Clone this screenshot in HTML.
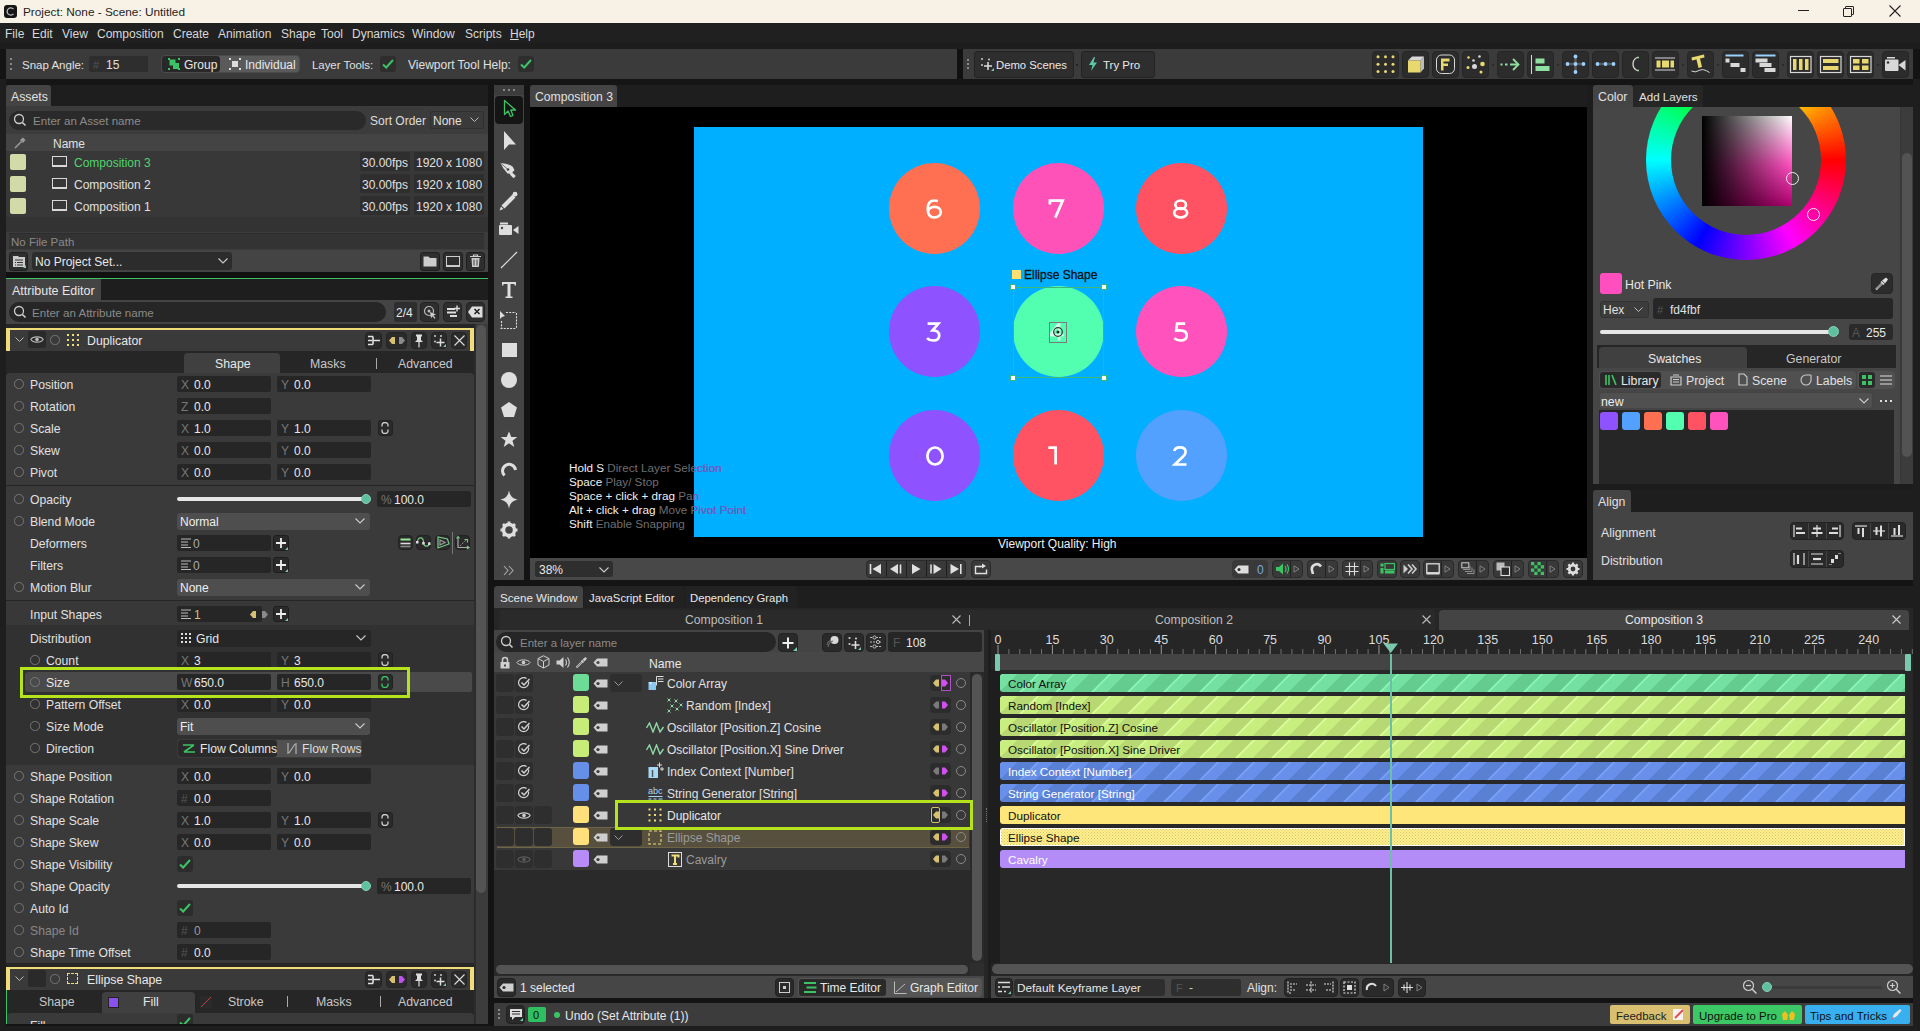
<!DOCTYPE html>
<html><head><meta charset="utf-8">
<style>
*{box-sizing:border-box;margin:0;padding:0}
html,body{width:1920px;height:1031px;overflow:hidden;background:#141414;font-family:"Liberation Sans",sans-serif;font-size:12px;color:#dcdcdc}
.a{position:absolute}
.t{position:absolute;white-space:nowrap;line-height:14px;margin-top:1px}
.fld{position:absolute;background:#2a2a2a;border-radius:2px}
.btn{position:absolute;background:#2c2c2c;border:1px solid #1f1f1f;border-radius:3px}
.gr{color:#7a7a7a}
</style></head><body>

<!-- TITLE BAR -->
<div class="a" style="left:0;top:0;width:1920px;height:23px;background:#f8f1e5"></div>
<div class="a" style="left:4px;top:5px;width:13px;height:13px;background:#151515;border-radius:3px"></div>
<svg class="a" style="left:4px;top:5px" width="13" height="13"><path d="M9.5 4.2A3.6 3.6 0 1 0 9.5 8.8" fill="none" stroke="#bbb" stroke-width="1.3"/></svg>
<div class="t" style="left:23px;top:4px;color:#1e1e1e;font-size:11.8px">Project: None - Scene: Untitled</div>
<div class="a" style="left:1798px;top:10px;width:11px;height:1px;background:#222"></div>
<div class="a" style="left:1845px;top:6px;width:9px;height:9px;border:1px solid #222;border-radius:1px"></div>
<div class="a" style="left:1843px;top:8px;width:9px;height:9px;border:1px solid #222;border-radius:1px;background:#f8f1e5"></div>
<svg class="a" style="left:1889px;top:5px" width="12" height="12"><path d="M0.5 0.5L11.5 11.5M11.5 0.5L0.5 11.5" stroke="#222" stroke-width="1.1"/></svg>

<!-- MENU -->
<div class="a" style="left:0;top:23px;width:1920px;height:20px;background:#202020"></div>
<div class="a" style="left:0;top:43px;width:1920px;height:6px;background:#1d1d1d"></div>
<div class="t" style="left:5px;top:26px;color:#d8d8d8">File</div>
<div class="t" style="left:32px;top:26px;color:#d8d8d8">Edit</div>
<div class="t" style="left:62px;top:26px;color:#d8d8d8">View</div>
<div class="t" style="left:97px;top:26px;color:#d8d8d8">Composition</div>
<div class="t" style="left:173px;top:26px;color:#d8d8d8">Create</div>
<div class="t" style="left:218px;top:26px;color:#d8d8d8">Animation</div>
<div class="t" style="left:281px;top:26px;color:#d8d8d8">Shape</div>
<div class="t" style="left:321px;top:26px;color:#d8d8d8">Tool</div>
<div class="t" style="left:352px;top:26px;color:#d8d8d8">Dynamics</div>
<div class="t" style="left:412px;top:26px;color:#d8d8d8">Window</div>
<div class="t" style="left:465px;top:26px;color:#d8d8d8">Scripts</div>
<div class="t" style="left:510px;top:26px;color:#d8d8d8"><u>H</u>elp</div>

<!-- TOOLBAR -->
<div class="a" style="left:6px;top:49px;width:951px;height:30px;background:#3b3b3b"></div>
<div class="a" style="left:963px;top:49px;width:950px;height:30px;background:#3b3b3b"></div>
<div class="a" style="left:0;top:79px;width:1920px;height:6px;background:#151515"></div>
<div class="a" style="left:10px;top:58px;width:2px;height:2px;background:#888;box-shadow:0 5px #888,0 10px #888"></div>
<div class="t" style="left:22px;top:57px;font-size:11.5px;color:#e0e0e0">Snap Angle:</div>
<div class="fld" style="left:89px;top:56px;width:59px;height:16px;background:#2e2e2e"></div>
<div class="t" style="left:93px;top:57px;color:#555;font-size:11px">#</div>
<div class="t" style="left:106px;top:57px;color:#e0e0e0">15</div>
<div class="a" style="left:161px;top:55px;width:139px;height:18px;background:#5a5a5a;border:1px solid #4a4a4a;border-radius:4px"></div>
<div class="a" style="left:162px;top:56px;width:58px;height:16px;background:#282828;border-radius:3px"></div>
<svg class="a" style="left:167px;top:57px" width="14" height="14"><path d="M1 1h2v2H1zM11 1h2v2h-2zM1 11h2v2H1zM11 11h2v2h-2z" fill="#3cc464"/><rect x="2.5" y="2.5" width="6" height="6" fill="#3cc464"/><rect x="6" y="6" width="6" height="6" fill="#3cc464"/></svg>
<div class="t" style="left:184px;top:57px;color:#e8e8e8">Group</div>
<svg class="a" style="left:228px;top:57px" width="14" height="14"><path d="M1 1h2v2H1zM11 1h2v2h-2zM1 11h2v2H1zM11 11h2v2h-2z" fill="#ddd"/><rect x="4" y="4" width="6" height="6" fill="#ddd"/></svg>
<div class="t" style="left:245px;top:57px;color:#e8e8e8">Individual</div>
<div class="t" style="left:312px;top:57px;font-size:11.4px;color:#e0e0e0">Layer Tools:</div>
<div class="fld" style="left:380px;top:56px;width:16px;height:16px;background:#2e2e2e;border-radius:3px"></div>
<svg class="a" style="left:381px;top:58px" width="14" height="12"><path d="M2 6.5L5.2 9.5L12 2" fill="none" stroke="#3cc464" stroke-width="2"/></svg>
<div class="t" style="left:408px;top:57px;color:#e0e0e0">Viewport Tool Help:</div>
<div class="fld" style="left:518px;top:56px;width:16px;height:16px;background:#2e2e2e;border-radius:3px"></div>
<svg class="a" style="left:519px;top:58px" width="14" height="12"><path d="M2 6.5L5.2 9.5L12 2" fill="none" stroke="#3cc464" stroke-width="2"/></svg>

<div class="a" style="left:957px;top:49px;width:6px;height:30px;background:#111"></div>
<div class="a" style="left:967px;top:59px;width:2px;height:2px;background:#888;box-shadow:0 4px #888,0 8px #888"></div>
<div class="btn" style="left:974px;top:51px;width:100px;height:27px;background:#2e2e2e;border-color:#232323"></div>
<svg class="a" style="left:980px;top:57px" width="14" height="14"><circle cx="2" cy="2" r="1" fill="#ccc"/><circle cx="9" cy="2.5" r="1" fill="#ccc"/><circle cx="2" cy="8" r="1" fill="#ccc"/><path d="M8 5v8M4 9h8" stroke="#ddd" stroke-width="1.5"/><path d="M11 14l3-3v3z" fill="#7ac8b0"/></svg>
<div class="t" style="left:996px;top:57px;font-size:11.3px;color:#e8e8e8">Demo Scenes</div>
<div class="a" style="left:1076px;top:64px;width:2px;height:2px;background:#222"></div>
<div class="btn" style="left:1081px;top:51px;width:74px;height:27px;background:#2e2e2e;border-color:#232323"></div>
<svg class="a" style="left:1088px;top:57px" width="10" height="14"><path d="M6 0L1 8h3.5L3 14l6-8.5H5.5L7 0z" fill="#5cc8a8"/></svg>
<div class="t" style="left:1103px;top:57px;font-size:11.5px;color:#e8e8e8">Try Pro</div>
<div class="a" style="left:6px;top:85px;width:482px;height:21px;background:#1e1e1e"></div>
<div class="a" style="left:6px;top:279px;width:482px;height:21px;background:#1e1e1e"></div>
<div class="a" style="left:530px;top:85px;width:1057px;height:22px;background:#1e1e1e"></div>
<div class="a" style="left:1593px;top:85px;width:320px;height:22px;background:#1e1e1e"></div>
<div class="a" style="left:1593px;top:490px;width:320px;height:22px;background:#1e1e1e"></div>
<div class="a" style="left:494px;top:586px;width:1419px;height:22px;background:#1e1e1e"></div>
<div class="a" style="left:0;top:79px;width:6px;height:952px;background:#1e1e1e"></div>
<div class="a" style="left:1913px;top:79px;width:7px;height:952px;background:#1e1e1e"></div>
<div class="a" style="left:0;top:1026px;width:1920px;height:5px;background:#1e1e1e"></div>
<div class="a" style="left:1587px;top:85px;width:6px;height:495px;background:#1c1c1c"></div>
<!-- TB ICONS -->
<div class="a" style="left:1372px;top:51px;width:27px;height:27px;background:#2c2c2c;border-radius:4px;border:1px solid #262626"></div>
<svg class="a" style="left:1372px;top:51px" width="27" height="27"><circle cx="6" cy="5.8" r="1.5" fill="#e8d870"/><circle cx="6" cy="13.2" r="1.5" fill="#e8d870"/><circle cx="6" cy="20.6" r="1.5" fill="#e8d870"/><circle cx="13.5" cy="5.8" r="1.5" fill="#e8d870"/><circle cx="13.5" cy="13.2" r="1.5" fill="#e8d870"/><circle cx="13.5" cy="20.6" r="1.5" fill="#e8d870"/><circle cx="21" cy="5.8" r="1.5" fill="#e8d870"/><circle cx="21" cy="13.2" r="1.5" fill="#e8d870"/><circle cx="21" cy="20.6" r="1.5" fill="#e8d870"/></svg>
<div class="a" style="left:1402px;top:51px;width:27px;height:27px;background:#2c2c2c;border-radius:4px;border:1px solid #262626"></div>
<svg class="a" style="left:1402px;top:51px" width="27" height="27"><path d="M6 9.5L10 5.5H22L18.5 9.5z" fill="#d8d8d8"/><path d="M18.5 9.5L22 5.5V17.5L18.5 21.5z" fill="#bbb"/><rect x="6" y="9.5" width="12.5" height="12" fill="#e8d870"/></svg>
<div class="a" style="left:1432px;top:51px;width:27px;height:27px;background:#2c2c2c;border-radius:4px;border:1px solid #262626"></div>
<svg class="a" style="left:1432px;top:51px" width="27" height="27"><rect x="4.5" y="4" width="18" height="18.5" rx="5" fill="none" stroke="#d8d8d8" stroke-width="1"/><path d="M9 7.5h2.5v12H9zM11.5 7.5h6v3h-6zM11.5 12.5h4.5v2.5h-4.5z" fill="#e8d870"/></svg>
<div class="a" style="left:1462px;top:51px;width:27px;height:27px;background:#2c2c2c;border-radius:4px;border:1px solid #262626"></div>
<svg class="a" style="left:1462px;top:51px" width="27" height="27"><circle cx="6.5" cy="6.5" r="1.3" fill="#e8d870"/><circle cx="17.5" cy="5.5" r="1.3" fill="#d8d8d8"/><circle cx="11.5" cy="9.5" r="1.3" fill="#d8d8d8"/><circle cx="20.5" cy="13" r="2.3" fill="#e8d870"/><circle cx="6" cy="16.5" r="1.5" fill="#e8d870"/><circle cx="12.5" cy="15.5" r="2.5" fill="#d8d8d8"/><circle cx="19" cy="21" r="1.5" fill="#e8d870"/></svg>
<div class="a" style="left:1497px;top:51px;width:27px;height:27px;background:#2c2c2c;border-radius:4px;border:1px solid #262626"></div>
<svg class="a" style="left:1497px;top:51px" width="27" height="27"><path d="M3.5 13.5h2M8 13.5h2.5M13 13.5h8" stroke="#8fe0a0" stroke-width="1.8"/><path d="M16 8L21.5 13.5L16 19" fill="none" stroke="#8fe0a0" stroke-width="1.8"/></svg>
<div class="a" style="left:1527px;top:51px;width:27px;height:27px;background:#2c2c2c;border-radius:4px;border:1px solid #262626"></div>
<svg class="a" style="left:1527px;top:51px" width="27" height="27"><path d="M4.5 4v19" stroke="#d8d8d8" stroke-width="1"/><rect x="8.5" y="7.5" width="9" height="5" fill="#8fe0a0"/><rect x="8.5" y="15" width="14" height="5" fill="#8fe0a0"/></svg>
<div class="a" style="left:1562px;top:51px;width:27px;height:27px;background:#2c2c2c;border-radius:4px;border:1px solid #262626"></div>
<svg class="a" style="left:1562px;top:51px" width="27" height="27"><path d="M6 13h15M13.5 5.5v15" stroke="#5a5a5a" stroke-width="2.5"/><circle cx="13.5" cy="5.5" r="1.9" fill="#9ad0ff"/><circle cx="5.5" cy="13" r="1.9" fill="#9ad0ff"/><circle cx="13.5" cy="13" r="1.9" fill="#9ad0ff"/><circle cx="21.5" cy="13" r="1.9" fill="#9ad0ff"/><circle cx="13.5" cy="21" r="1.9" fill="#9ad0ff"/></svg>
<div class="a" style="left:1592px;top:51px;width:27px;height:27px;background:#2c2c2c;border-radius:4px;border:1px solid #262626"></div>
<svg class="a" style="left:1592px;top:51px" width="27" height="27"><path d="M5 13h18" stroke="#5a5a5a" stroke-width="2.5"/><circle cx="5.5" cy="13" r="1.9" fill="#9ad0ff"/><circle cx="13.5" cy="13" r="1.9" fill="#9ad0ff"/><circle cx="21.5" cy="13" r="1.9" fill="#9ad0ff"/></svg>
<div class="a" style="left:1622px;top:51px;width:27px;height:27px;background:#2c2c2c;border-radius:4px;border:1px solid #262626"></div>
<svg class="a" style="left:1622px;top:51px" width="27" height="27"><path d="M19 6.5A8 7.5 0 0 0 19 19.5" fill="none" stroke="#d8d8d8" stroke-width="1.3" transform="translate(-4,0)"/><path d="M15 6.5h2M15 19.5h2" stroke="#8fe0a0" stroke-width="1.6"/></svg>
<div class="a" style="left:1652px;top:51px;width:27px;height:27px;background:#2c2c2c;border-radius:4px;border:1px solid #262626"></div>
<svg class="a" style="left:1652px;top:51px" width="27" height="27"><path d="M3 7h20M3 19h20" stroke="#d8d8d8" stroke-width="1.2"/><rect x="4.5" y="9.5" width="4" height="7" fill="#e8d870"/><rect x="10" y="9.5" width="7" height="7" fill="#e8d870"/><rect x="18.5" y="9.5" width="3.5" height="7" fill="#e8d870"/></svg>
<div class="a" style="left:1687px;top:51px;width:27px;height:27px;background:#2c2c2c;border-radius:4px;border:1px solid #262626"></div>
<svg class="a" style="left:1687px;top:51px" width="27" height="27"><path d="M4.5 6.5L17 3.5L17.5 6.5L13 7.5L15 16L11.5 17L9.5 8.5L5 9.5z" fill="#e8d870"/><path d="M4.5 20Q8 22 12 19.5T22.5 21.5" fill="none" stroke="#d8d8d8" stroke-width="1"/></svg>
<div class="a" style="left:1722px;top:51px;width:27px;height:27px;background:#2c2c2c;border-radius:4px;border:1px solid #262626"></div>
<svg class="a" style="left:1722px;top:51px" width="27" height="27"><path d="M3.5 4.5h18" stroke="#9ad0ff" stroke-width="2"/><rect x="3.5" y="7.5" width="4" height="4" fill="#d8d8d8"/><rect x="8.5" y="12" width="9" height="4" fill="#d8d8d8"/><rect x="18.5" y="17" width="5" height="4" fill="#d8d8d8"/></svg>
<div class="a" style="left:1752px;top:51px;width:27px;height:27px;background:#2c2c2c;border-radius:4px;border:1px solid #262626"></div>
<svg class="a" style="left:1752px;top:51px" width="27" height="27"><path d="M3.5 4.5h20" stroke="#9ad0ff" stroke-width="2"/><rect x="3.5" y="7.5" width="12" height="4" fill="#d8d8d8"/><rect x="7.5" y="12" width="12" height="4" fill="#d8d8d8"/><rect x="12.5" y="17" width="11" height="4" fill="#d8d8d8"/></svg>
<div class="a" style="left:1787px;top:51px;width:27px;height:27px;background:#2c2c2c;border-radius:4px;border:1px solid #262626"></div>
<svg class="a" style="left:1787px;top:51px" width="27" height="27"><rect x="3.5" y="5.5" width="20.5" height="16" fill="none" stroke="#d8d8d8" stroke-width="1.2"/><rect x="6" y="8" width="3.5" height="11" fill="#e8d870"/><rect x="12" y="8" width="3.5" height="11" fill="#e8d870"/><rect x="18" y="8" width="3.5" height="11" fill="#e8d870"/></svg>
<div class="a" style="left:1817px;top:51px;width:27px;height:27px;background:#2c2c2c;border-radius:4px;border:1px solid #262626"></div>
<svg class="a" style="left:1817px;top:51px" width="27" height="27"><rect x="3.5" y="5.5" width="20.5" height="16" fill="none" stroke="#d8d8d8" stroke-width="1.2"/><rect x="6" y="8" width="15.5" height="4" fill="#e8d870"/><rect x="6" y="15" width="15.5" height="4" fill="#e8d870"/></svg>
<div class="a" style="left:1847px;top:51px;width:27px;height:27px;background:#2c2c2c;border-radius:4px;border:1px solid #262626"></div>
<svg class="a" style="left:1847px;top:51px" width="27" height="27"><rect x="3.5" y="5.5" width="20.5" height="16" fill="none" stroke="#d8d8d8" stroke-width="1.2"/><rect x="6" y="8" width="6.5" height="4.5" fill="#e8d870"/><rect x="15" y="8" width="6.5" height="4.5" fill="#e8d870"/><rect x="6" y="14.5" width="6.5" height="4.5" fill="#e8d870"/><rect x="15" y="14.5" width="6.5" height="4.5" fill="#e8d870"/></svg>
<div class="a" style="left:1882px;top:51px;width:27px;height:27px;background:#2c2c2c;border-radius:4px;border:1px solid #262626"></div>
<svg class="a" style="left:1882px;top:51px" width="27" height="27"><rect x="3" y="8.5" width="13.5" height="11.5" rx="1" fill="#d8d8d8"/><rect x="5" y="6" width="8" height="1.5" fill="#d8d8d8"/><path d="M16.5 14L23.5 9V19.5z" fill="#d8d8d8"/><circle cx="6" cy="11.5" r="1.3" fill="#333"/></svg>
<div class="a" style="left:1491.5px;top:63.5px;width:2px;height:2px;background:#262626;border-radius:50%"></div>
<div class="a" style="left:1556.5px;top:63.5px;width:2px;height:2px;background:#262626;border-radius:50%"></div>
<div class="a" style="left:1681.5px;top:63.5px;width:2px;height:2px;background:#262626;border-radius:50%"></div>
<div class="a" style="left:1716.5px;top:63.5px;width:2px;height:2px;background:#262626;border-radius:50%"></div>
<div class="a" style="left:1781.5px;top:63.5px;width:2px;height:2px;background:#262626;border-radius:50%"></div>
<div class="a" style="left:1876.5px;top:63.5px;width:2px;height:2px;background:#262626;border-radius:50%"></div>

<!-- ASSETS PANEL -->
<div class="a" style="left:6px;top:85px;width:45px;height:22px;background:#444;border-radius:3px 3px 0 0"></div>
<div class="t" style="left:11px;top:89px;color:#e0e0e0;font-size:12.3px">Assets</div>
<div class="a" style="left:6px;top:106px;width:482px;height:166px;background:#3c3c3c"></div>
<div class="a" style="left:9px;top:111px;width:357px;height:19px;background:#2a2a2a;border-radius:10px"></div>
<svg class="a" style="left:13px;top:113px" width="14" height="14"><circle cx="6" cy="6" r="4.5" fill="none" stroke="#ccc" stroke-width="1.3"/><path d="M9.2 9.2L12.5 12.5" stroke="#ccc" stroke-width="1.6"/></svg>
<div class="t" style="left:33px;top:113px;color:#8a8a8a;font-size:11.6px">Enter an Asset name</div>
<div class="t" style="left:370px;top:113px;color:#ddd">Sort Order</div>
<div class="a" style="left:430px;top:111px;width:54px;height:18px;background:#3a3a3a;border:1px solid #303030;border-radius:2px"></div>
<div class="t" style="left:433px;top:113px;color:#e0e0e0">None</div>
<svg class="a" style="left:470px;top:117px" width="9" height="6"><path d="M0.5 0.5L4.5 4.5L8.5 0.5" fill="none" stroke="#bbb" stroke-width="1"/></svg>
<div class="a" style="left:6px;top:134px;width:482px;height:17px;background:#444"></div>
<svg class="a" style="left:13px;top:136px" width="14" height="14"><path d="M2 12L8.5 5.5" stroke="#999" stroke-width="1.6"/><path d="M7 4L10 1.5L12.5 4L10 7z" fill="#999"/></svg>
<div class="t" style="left:53px;top:136px;color:#e0e0e0">Name</div>
<div class="a" style="left:6px;top:151px;width:482px;height:66px;background:#383838"></div>
<div class="a" style="left:6px;top:217px;width:482px;height:15px;background:#333"></div>
<div class="a" style="left:10px;top:154px;width:16px;height:16px;background:#d2dba8;border-radius:2px"></div>
<div class="a" style="left:52px;top:156px;width:15px;height:11px;border:1px solid #d8d8d8;border-bottom-width:2px"></div>
<div class="t" style="left:74px;top:155px;color:#4fd46c">Composition 3</div>
<div class="a" style="left:360px;top:152px;width:50px;height:19px;background:#2e2e2e;border-radius:2px"></div>
<div class="t" style="left:362px;top:155px;color:#e0e0e0">30.00fps</div>
<div class="a" style="left:414px;top:152px;width:70px;height:19px;background:#2e2e2e;border-radius:2px"></div>
<div class="t" style="left:416px;top:155px;color:#e0e0e0">1920 x 1080</div>
<div class="a" style="left:10px;top:176px;width:16px;height:16px;background:#d2dba8;border-radius:2px"></div>
<div class="a" style="left:52px;top:178px;width:15px;height:11px;border:1px solid #d8d8d8;border-bottom-width:2px"></div>
<div class="t" style="left:74px;top:177px;color:#e0e0e0">Composition 2</div>
<div class="a" style="left:360px;top:174px;width:50px;height:19px;background:#2e2e2e;border-radius:2px"></div>
<div class="t" style="left:362px;top:177px;color:#e0e0e0">30.00fps</div>
<div class="a" style="left:414px;top:174px;width:70px;height:19px;background:#2e2e2e;border-radius:2px"></div>
<div class="t" style="left:416px;top:177px;color:#e0e0e0">1920 x 1080</div>
<div class="a" style="left:10px;top:198px;width:16px;height:16px;background:#d2dba8;border-radius:2px"></div>
<div class="a" style="left:52px;top:200px;width:15px;height:11px;border:1px solid #d8d8d8;border-bottom-width:2px"></div>
<div class="t" style="left:74px;top:199px;color:#e0e0e0">Composition 1</div>
<div class="a" style="left:360px;top:196px;width:50px;height:19px;background:#2e2e2e;border-radius:2px"></div>
<div class="t" style="left:362px;top:199px;color:#e0e0e0">30.00fps</div>
<div class="a" style="left:414px;top:196px;width:70px;height:19px;background:#2e2e2e;border-radius:2px"></div>
<div class="t" style="left:416px;top:199px;color:#e0e0e0">1920 x 1080</div>
<div class="a" style="left:9px;top:233px;width:475px;height:16px;background:#333;border-top:1px solid #2c2c2c"></div>
<div class="t" style="left:11px;top:234px;color:#8a8a8a;font-size:11.5px">No File Path</div>
<div class="a" style="left:6px;top:250px;width:482px;height:22px;background:#444"></div>
<div class="btn" style="left:9px;top:252px;width:19px;height:19px;background:#2e2e2e"></div>
<svg class="a" style="left:12px;top:254px" width="14" height="14"><path d="M1 2h5l1 1h6v10H1z" fill="#ccc"/><path d="M3 6h8M3 8.5h1M5 8.5h6M3 11h1M5 11h6" stroke="#333" stroke-width="1"/><path d="M11 14l3-3v3z" fill="#7ac8b0"/></svg>
<div class="a" style="left:32px;top:252px;width:200px;height:18px;background:#2c2c2c;border-radius:3px"></div>
<div class="t" style="left:35px;top:254px;color:#e8e8e8">No Project Set...</div>
<svg class="a" style="left:218px;top:258px" width="10" height="6"><path d="M0.5 0.5L5 5L9.5 0.5" fill="none" stroke="#ccc" stroke-width="1.1"/></svg>
<div class="btn" style="left:420px;top:252px;width:20px;height:19px;background:#2e2e2e"></div>
<svg class="a" style="left:423px;top:255px" width="14" height="12"><path d="M0.5 1.5h5l1.5 1.5h6.5v8.5H0.5z" fill="#ccc"/></svg>
<div class="btn" style="left:443px;top:252px;width:20px;height:19px;background:#2e2e2e"></div>
<div class="a" style="left:446px;top:256px;width:14px;height:11px;border:1.5px solid #ccc;border-bottom-width:2.5px"></div>
<div class="btn" style="left:466px;top:252px;width:19px;height:19px;background:#2e2e2e"></div>
<svg class="a" style="left:469px;top:254px" width="13" height="14"><path d="M1 2.5h11M4.5 2.5V1h4v1.5" stroke="#ccc" stroke-width="1.2" fill="none"/><path d="M2.5 4h8l-.6 9h-6.8z" fill="#ccc"/><path d="M5 5.5v6M8 5.5v6" stroke="#333" stroke-width="0.9"/></svg>
<div class="a" style="left:6px;top:272px;width:482px;height:6px;background:#111"></div>
<div class="a" style="left:6px;top:278px;width:482px;height:1px;background:#3cc464"></div>

<!-- ATTRIBUTE EDITOR -->
<div class="a" style="left:6px;top:279px;width:95px;height:21px;background:#444;"></div>
<div class="t" style="left:12px;top:283px;color:#e6e6e6;font-size:12.5px;">Attribute Editor</div>
<div class="a" style="left:6px;top:300px;width:482px;height:24px;background:#444;"></div>
<div class="a" style="left:9px;top:302px;width:377px;height:20px;background:#262626;border-radius:10px"></div>
<svg class="a" style="left:13px;top:305px" width="14" height="14"><circle cx="6" cy="6" r="4.5" fill="none" stroke="#ccc" stroke-width="1.3"/><path d="M9.2 9.2L12.5 12.5" stroke="#ccc" stroke-width="1.6"/></svg>
<div class="t" style="left:32px;top:305px;color:#8a8a8a;font-size:11.6px;">Enter an Attribute name</div>
<div class="a" style="left:394px;top:302px;width:23px;height:20px;background:#2e2e2e;border-radius:3px"></div>
<div class="t" style="left:396px;top:305px;color:#e8e8e8;font-size:12px;">2/4</div>
<div class="a" style="left:420px;top:302px;width:19px;height:20px;background:#2e2e2e;border-radius:4px;border:1px solid #232323"></div>
<div class="a" style="left:443px;top:302px;width:19px;height:20px;background:#2e2e2e;border-radius:4px;border:1px solid #232323"></div>
<div class="a" style="left:466px;top:302px;width:19px;height:20px;background:#2e2e2e;border-radius:4px;border:1px solid #232323"></div>
<svg class="a" style="left:423px;top:305px" width="14" height="14"><circle cx="6" cy="6" r="4.5" fill="none" stroke="#bbb" stroke-width="1.2"/><circle cx="6" cy="6" r="1.5" fill="#bbb"/><path d="M7 7l6 2.5-2.5 1 2 2.5-1 .8-2-2.5-1.5 2z" fill="#ccc"/></svg>
<svg class="a" style="left:446px;top:305px" width="14" height="14"><path d="M1 4h8M1 7.5h9M4 11h7" stroke="#ddd" stroke-width="2"/><path d="M11 0.5v6M8 3.5h6" stroke="#ddd" stroke-width="1.4"/></svg>
<svg class="a" style="left:468px;top:306px" width="15" height="12"><path d="M4 0.5h10.5v11H4L0 6z" fill="#ddd"/><path d="M6.5 3l5 5M11.5 3l-5 5" stroke="#222" stroke-width="1.6"/></svg>
<div class="a" style="left:6px;top:324px;width:482px;height:4px;background:#262626;"></div>
<div class="a" style="left:6px;top:324px;width:482px;height:700px;background:#262626;"></div>
<div class="a" style="left:6px;top:328px;width:468px;height:23px;background:#3a3a3a;"></div>
<div class="a" style="left:6px;top:328px;width:468px;height:2px;background:#f0dc78;"></div>
<div class="a" style="left:6px;top:328px;width:4px;height:23px;background:#f0dc78;"></div>
<div class="a" style="left:470px;top:328px;width:4px;height:23px;background:#f0dc78;"></div>
<svg class="a" style="left:15px;top:337px" width="9" height="5"><path d="M0.5 0.5L4.5 4.5L8.5 0.5" fill="none" stroke="#bbb" stroke-width="1"/></svg>
<div class="a" style="left:28px;top:331px;width:18px;height:17px;background:#2a2a2a;border-radius:2px"></div>
<svg class="a" style="left:30px;top:335px" width="14" height="9"><path d="M0.8 4.5C3 1 11 1 13.2 4.5C11 8 3 8 0.8 4.5z" fill="none" stroke="#bbb" stroke-width="1.1"/><circle cx="7" cy="4.5" r="1.8" fill="#bbb"/></svg>
<div class="a" style="left:50.3px;top:335.2px;width:9.4px;height:9.4px;border:1.6px solid #777;border-radius:50%"></div>
<svg class="a" style="left:67px;top:334px" width="12" height="12"><rect x="0" y="0" width="2" height="2" fill="#f0dc78"/><rect x="0" y="5" width="2" height="2" fill="#f0dc78"/><rect x="0" y="10" width="2" height="2" fill="#f0dc78"/><rect x="5" y="0" width="2" height="2" fill="#f0dc78"/><rect x="5" y="5" width="2" height="2" fill="#f0dc78"/><rect x="5" y="10" width="2" height="2" fill="#f0dc78"/><rect x="10" y="0" width="2" height="2" fill="#f0dc78"/><rect x="10" y="5" width="2" height="2" fill="#f0dc78"/><rect x="10" y="10" width="2" height="2" fill="#f0dc78"/></svg>
<div class="t" style="left:87px;top:333px;color:#e8e8e8;font-size:12.3px;">Duplicator</div>
<div class="a" style="left:365px;top:332px;width:17px;height:17px;background:#2a2a2a;border-radius:4px;border:1px solid #242424"></div>
<div class="a" style="left:386px;top:332px;width:21px;height:17px;background:#2a2a2a;border-radius:4px;border:1px solid #242424"></div>
<div class="a" style="left:411px;top:332px;width:16px;height:17px;background:#2a2a2a;border-radius:4px;border:1px solid #242424"></div>
<div class="a" style="left:431px;top:332px;width:16px;height:17px;background:#2a2a2a;border-radius:4px;border:1px solid #242424"></div>
<div class="a" style="left:451px;top:332px;width:16px;height:17px;background:#2a2a2a;border-radius:4px;border:1px solid #242424"></div>
<svg class="a" style="left:368px;top:335px" width="13" height="11"><path d="M0 1.5h5M0 5.5h4M0 9.5h5M5 1.5v8M5 5.5h7" stroke="#e0e0e0" stroke-width="1.6" fill="none"/></svg>
<svg class="a" style="left:388px;top:336px" width="18" height="9"><path d="M1 4.5L4 1h3v7H4z" fill="#d6c070"/><path d="M11 1h3l3 3.5L14 8h-3z" fill="#8a8a8a"/></svg>
<svg class="a" style="left:414px;top:334px" width="10" height="14"><path d="M2 0.5h6v1.5L7 3v3l2 2H1l2-2V3L2 2z" fill="#ddd"/><path d="M5 8v5.5" stroke="#ddd" stroke-width="1.2"/></svg>
<svg class="a" style="left:433px;top:334px" width="13" height="13"><circle cx="2" cy="2" r="1" fill="#ccc"/><circle cx="8" cy="2" r="1" fill="#ccc"/><circle cx="2" cy="7.5" r="1" fill="#ccc"/><path d="M7.5 4.5v8M3.5 8.5h8" stroke="#ddd" stroke-width="1.5"/><path d="M10 13l3-3v3z" fill="#7ac8b0"/></svg>
<svg class="a" style="left:454px;top:335px" width="11" height="11"><path d="M0.5 0.5L10.5 10.5M10.5 0.5L0.5 10.5" stroke="#ddd" stroke-width="1.1"/></svg>
<div class="a" style="left:6px;top:351px;width:468px;height:22px;background:#262626;"></div>
<div class="a" style="left:184px;top:353px;width:96px;height:20px;background:#404040;border-radius:4px 4px 0 0"></div>
<div class="t" style="left:215px;top:356px;color:#e8e8e8;font-size:12.3px;">Shape</div>
<div class="t" style="left:310px;top:356px;color:#c8c8c8;font-size:12.3px;">Masks</div>
<div class="a" style="left:376px;top:358px;width:1px;height:11px;background:#aaa;"></div>
<div class="t" style="left:398px;top:356px;color:#c8c8c8;font-size:12.3px;">Advanced</div>
<div class="a" style="left:6px;top:373px;width:468px;height:590px;background:#3a3a3a;border-radius:4px 4px 0 0"></div>
<div class="a" style="left:6px;top:485px;width:468px;height:1px;background:#262626;"></div>
<div class="a" style="left:6px;top:600px;width:468px;height:1px;background:#262626;"></div>
<div class="a" style="left:6px;top:601px;width:468px;height:24px;background:#383838;"></div>
<div class="a" style="left:6px;top:625px;width:468px;height:140px;background:#313131;"></div>
<div class="a" style="left:474px;top:324px;width:14px;height:700px;background:#3c3c3c;"></div>
<div class="a" style="left:474px;top:324px;width:2px;height:700px;background:#2c2c2c;"></div>
<div class="a" style="left:476px;top:325px;width:10px;height:568px;background:#545454;border-radius:5px"></div>
<div class="a" style="left:14.3px;top:379.2px;width:9.4px;height:9.4px;border:1.6px solid #777;border-radius:50%"></div>
<div class="t" style="left:30px;top:377px;color:#e0e0e0;font-size:12.2px;">Position</div>
<div class="a" style="left:177px;top:376px;width:94px;height:16px;background:#262626;border-radius:2px"></div>
<div class="t" style="left:181px;top:377px;color:#777;font-size:12px;">X</div>
<div class="t" style="left:194px;top:377px;color:#e8e8e8;font-size:12px;">0.0</div>
<div class="a" style="left:277px;top:376px;width:94px;height:16px;background:#262626;border-radius:2px"></div>
<div class="t" style="left:281px;top:377px;color:#777;font-size:12px;">Y</div>
<div class="t" style="left:294px;top:377px;color:#e8e8e8;font-size:12px;">0.0</div>
<div class="a" style="left:14.3px;top:401.2px;width:9.4px;height:9.4px;border:1.6px solid #777;border-radius:50%"></div>
<div class="t" style="left:30px;top:399px;color:#e0e0e0;font-size:12.2px;">Rotation</div>
<div class="a" style="left:177px;top:398px;width:94px;height:16px;background:#262626;border-radius:2px"></div>
<div class="t" style="left:181px;top:399px;color:#777;font-size:12px;">Z</div>
<div class="t" style="left:194px;top:399px;color:#e8e8e8;font-size:12px;">0.0</div>
<div class="a" style="left:14.3px;top:423.2px;width:9.4px;height:9.4px;border:1.6px solid #777;border-radius:50%"></div>
<div class="t" style="left:30px;top:421px;color:#e0e0e0;font-size:12.2px;">Scale</div>
<div class="a" style="left:177px;top:420px;width:94px;height:16px;background:#262626;border-radius:2px"></div>
<div class="t" style="left:181px;top:421px;color:#777;font-size:12px;">X</div>
<div class="t" style="left:194px;top:421px;color:#e8e8e8;font-size:12px;">1.0</div>
<div class="a" style="left:277px;top:420px;width:94px;height:16px;background:#262626;border-radius:2px"></div>
<div class="t" style="left:281px;top:421px;color:#777;font-size:12px;">Y</div>
<div class="t" style="left:294px;top:421px;color:#e8e8e8;font-size:12px;">1.0</div>
<div class="a" style="left:378px;top:420px;width:15px;height:16px;background:#2a2a2a;border-radius:3px;border:1px solid #222"></div>
<svg class="a" style="left:381px;top:422px" width="8" height="12"><path d="M1 4.5V3a3 2.5 0 0 1 6 0v1.5M1 7.5V9a3 2.5 0 0 0 6 0V7.5" fill="none" stroke="#cfcfcf" stroke-width="1.3"/></svg>
<div class="a" style="left:14.3px;top:445.2px;width:9.4px;height:9.4px;border:1.6px solid #777;border-radius:50%"></div>
<div class="t" style="left:30px;top:443px;color:#e0e0e0;font-size:12.2px;">Skew</div>
<div class="a" style="left:177px;top:442px;width:94px;height:16px;background:#262626;border-radius:2px"></div>
<div class="t" style="left:181px;top:443px;color:#777;font-size:12px;">X</div>
<div class="t" style="left:194px;top:443px;color:#e8e8e8;font-size:12px;">0.0</div>
<div class="a" style="left:277px;top:442px;width:94px;height:16px;background:#262626;border-radius:2px"></div>
<div class="t" style="left:281px;top:443px;color:#777;font-size:12px;">Y</div>
<div class="t" style="left:294px;top:443px;color:#e8e8e8;font-size:12px;">0.0</div>
<div class="a" style="left:14.3px;top:467.2px;width:9.4px;height:9.4px;border:1.6px solid #777;border-radius:50%"></div>
<div class="t" style="left:30px;top:465px;color:#e0e0e0;font-size:12.2px;">Pivot</div>
<div class="a" style="left:177px;top:464px;width:94px;height:16px;background:#262626;border-radius:2px"></div>
<div class="t" style="left:181px;top:465px;color:#777;font-size:12px;">X</div>
<div class="t" style="left:194px;top:465px;color:#e8e8e8;font-size:12px;">0.0</div>
<div class="a" style="left:277px;top:464px;width:94px;height:16px;background:#262626;border-radius:2px"></div>
<div class="t" style="left:281px;top:465px;color:#777;font-size:12px;">Y</div>
<div class="t" style="left:294px;top:465px;color:#e8e8e8;font-size:12px;">0.0</div>
<div class="a" style="left:14.3px;top:494.2px;width:9.4px;height:9.4px;border:1.6px solid #777;border-radius:50%"></div>
<div class="t" style="left:30px;top:492px;color:#e0e0e0;font-size:12.2px;">Opacity</div>
<div class="a" style="left:177px;top:497px;width:189px;height:4px;background:#e6e6e6;border-radius:2px"></div>
<div class="a" style="left:361px;top:494px;width:10px;height:10px;border-radius:50%;background:#5fc0a0;border:1px solid #86d0b8"></div>
<div class="a" style="left:377px;top:491px;width:94px;height:16px;background:#262626;border-radius:2px"></div>
<div class="t" style="left:381px;top:492px;color:#777;font-size:12px;">%</div>
<div class="t" style="left:394px;top:492px;color:#e8e8e8;font-size:12px;">100.0</div>
<div class="a" style="left:14.3px;top:516.2px;width:9.4px;height:9.4px;border:1.6px solid #777;border-radius:50%"></div>
<div class="t" style="left:30px;top:514px;color:#e0e0e0;font-size:12.2px;">Blend Mode</div>
<div class="a" style="left:177px;top:513px;width:193px;height:17px;background:#4e4e4e;border-radius:3px"></div>
<div class="t" style="left:180px;top:514px;color:#eee;font-size:12px;">Normal</div>
<svg class="a" style="left:355px;top:518px" width="10" height="6"><path d="M0.5 0.5L5 5L9.5 0.5" fill="none" stroke="#ccc" stroke-width="1.1"/></svg>
<div class="t" style="left:30px;top:536px;color:#e0e0e0;font-size:12.2px;">Deformers</div>
<div class="a" style="left:177px;top:535px;width:94px;height:16px;background:#262626;border-radius:2px"></div>
<svg class="a" style="left:181px;top:538px" width="10" height="10"><path d="M0 1h10M0 4h7M0 7h7M0 9.5h10" stroke="#bbb" stroke-width="1"/></svg>
<div class="t" style="left:193px;top:536px;color:#aaa;font-size:12px;">0</div>
<div class="a" style="left:273px;top:535px;width:16px;height:16px;background:#2a2a2a;border-radius:3px;border:1px solid #1e1e1e"></div>
<svg class="a" style="left:276px;top:538px" width="10" height="10"><path d="M5 0v10M0 5h10" stroke="#eee" stroke-width="1.8"/></svg>
<svg class="a" style="left:285px;top:547px" width="3" height="3"><path d="M3 0v3H0z" fill="#7ac8b0"/></svg>
<div class="a" style="left:398px;top:535px;width:15px;height:15px;background:#2a2a2a;border-radius:4px;border:1px solid #222"></div>
<svg class="a" style="left:400px;top:537px" width="11" height="11"><path d="M0.5 2.5h10" stroke="#98e898" stroke-width="2"/><path d="M0.5 6.5h10" stroke="#ddd" stroke-width="1.6"/><path d="M0.5 9.5h10" stroke="#888" stroke-width="1.6"/></svg>
<div class="a" style="left:416px;top:535px;width:15px;height:15px;background:#2a2a2a;border-radius:4px;border:1px solid #222"></div>
<svg class="a" style="left:416px;top:536px" width="15" height="13"><path d="M1.5 6C1.5 0.5 7.5 0.5 7.5 6S13.5 11.5 13.5 6" fill="none" stroke="#7acc88" stroke-width="1.1"/><rect x="0" y="5" width="2.5" height="2.5" fill="#ddd"/><rect x="6.2" y="6" width="2.5" height="2.5" fill="#ddd"/><rect x="12" y="6.5" width="2.5" height="2.5" fill="#ddd"/></svg>
<div class="a" style="left:435px;top:535px;width:15px;height:15px;background:#2a2a2a;border-radius:4px;border:1px solid #222"></div>
<svg class="a" style="left:436px;top:536px" width="14" height="13"><path d="M2 1v11L13 8 11.5 3z" fill="none" stroke="#7acc88" stroke-width="1.2"/><path d="M4 4v5l5-2.5z" fill="none" stroke="#999" stroke-width="1.2"/></svg>
<div class="a" style="left:452px;top:532px;width:1px;height:22px;background:#777;"></div>
<div class="a" style="left:455px;top:535px;width:15px;height:15px;background:#2a2a2a;border-radius:4px;border:1px solid #222"></div>
<svg class="a" style="left:455px;top:535px" width="16" height="16"><path d="M3 2.5v10h10" fill="none" stroke="#aaa" stroke-width="1.2"/><path d="M5 11L11 5" stroke="#aaa" stroke-width="0.9" stroke-dasharray="1.5 1"/><path d="M1.5 3.5L3 1.5L4.5 3.5M12 11l2 1.5-2 1.5M9.5 4.5h3v3" fill="none" stroke="#7acc88" stroke-width="1.2"/></svg>
<div class="t" style="left:30px;top:558px;color:#e0e0e0;font-size:12.2px;">Filters</div>
<div class="a" style="left:177px;top:557px;width:94px;height:16px;background:#262626;border-radius:2px"></div>
<svg class="a" style="left:181px;top:560px" width="10" height="10"><path d="M0 1h10M0 4h7M0 7h7M0 9.5h10" stroke="#bbb" stroke-width="1"/></svg>
<div class="t" style="left:193px;top:558px;color:#aaa;font-size:12px;">0</div>
<div class="a" style="left:273px;top:557px;width:16px;height:16px;background:#2a2a2a;border-radius:3px;border:1px solid #1e1e1e"></div>
<svg class="a" style="left:276px;top:560px" width="10" height="10"><path d="M5 0v10M0 5h10" stroke="#eee" stroke-width="1.8"/></svg>
<svg class="a" style="left:285px;top:569px" width="3" height="3"><path d="M3 0v3H0z" fill="#7ac8b0"/></svg>
<div class="a" style="left:14.3px;top:582.2px;width:9.4px;height:9.4px;border:1.6px solid #777;border-radius:50%"></div>
<div class="t" style="left:30px;top:580px;color:#e0e0e0;font-size:12.2px;">Motion Blur</div>
<div class="a" style="left:177px;top:579px;width:193px;height:17px;background:#4e4e4e;border-radius:3px"></div>
<div class="t" style="left:180px;top:580px;color:#eee;font-size:12px;">None</div>
<svg class="a" style="left:355px;top:584px" width="10" height="6"><path d="M0.5 0.5L5 5L9.5 0.5" fill="none" stroke="#ccc" stroke-width="1.1"/></svg>
<div class="t" style="left:30px;top:607px;color:#e0e0e0;font-size:12.2px;">Input Shapes</div>
<div class="a" style="left:177px;top:606px;width:85px;height:16px;background:#262626;border-radius:2px"></div>
<svg class="a" style="left:181px;top:609px" width="10" height="10"><path d="M0 1h10M0 4h7M0 7h7M0 9.5h10" stroke="#bbb" stroke-width="1"/></svg>
<div class="t" style="left:194px;top:607px;color:#d6c070;font-size:12px;">1</div>
<svg class="a" style="left:249px;top:610px" width="20" height="9"><path d="M1 4.5L4 1h3v7H4z" fill="#d6c070"/><path d="M13 1h3l3 3.5L16 8h-3z" fill="#8a8a8a"/></svg>
<div class="a" style="left:273px;top:606px;width:16px;height:16px;background:#2a2a2a;border-radius:3px;border:1px solid #1e1e1e"></div>
<svg class="a" style="left:276px;top:609px" width="10" height="10"><path d="M5 0v10M0 5h10" stroke="#eee" stroke-width="1.8"/></svg>
<svg class="a" style="left:285px;top:618px" width="3" height="3"><path d="M3 0v3H0z" fill="#7ac8b0"/></svg>
<div class="t" style="left:30px;top:631px;color:#e0e0e0;font-size:12.2px;">Distribution</div>
<div class="a" style="left:177px;top:630px;width:194px;height:17px;background:#262626;border-radius:3px"></div>
<svg class="a" style="left:181px;top:633px" width="11" height="11"><rect x="0" y="0" width="2" height="2" fill="#ddd"/><rect x="0" y="4" width="2" height="2" fill="#ddd"/><rect x="0" y="8" width="2" height="2" fill="#ddd"/><rect x="4" y="0" width="2" height="2" fill="#ddd"/><rect x="4" y="4" width="2" height="2" fill="#ddd"/><rect x="4" y="8" width="2" height="2" fill="#ddd"/><rect x="8" y="0" width="2" height="2" fill="#ddd"/><rect x="8" y="4" width="2" height="2" fill="#ddd"/><rect x="8" y="8" width="2" height="2" fill="#ddd"/></svg>
<div class="t" style="left:196px;top:631px;color:#e8e8e8;font-size:12.2px;">Grid</div>
<svg class="a" style="left:356px;top:635px" width="10" height="6"><path d="M0.5 0.5L5 5L9.5 0.5" fill="none" stroke="#ccc" stroke-width="1.1"/></svg>
<div class="a" style="left:30.3px;top:655.2px;width:9.4px;height:9.4px;border:1.6px solid #777;border-radius:50%"></div>
<div class="t" style="left:46px;top:653px;color:#e0e0e0;font-size:12.2px;">Count</div>
<div class="a" style="left:177px;top:652px;width:94px;height:16px;background:#262626;border-radius:2px"></div>
<div class="t" style="left:181px;top:653px;color:#777;font-size:12px;">X</div>
<div class="t" style="left:194px;top:653px;color:#e8e8e8;font-size:12px;">3</div>
<div class="a" style="left:277px;top:652px;width:94px;height:16px;background:#262626;border-radius:2px"></div>
<div class="t" style="left:281px;top:653px;color:#777;font-size:12px;">Y</div>
<div class="t" style="left:294px;top:653px;color:#e8e8e8;font-size:12px;">3</div>
<div class="a" style="left:378px;top:652px;width:15px;height:16px;background:#2a2a2a;border-radius:3px;border:1px solid #222"></div>
<svg class="a" style="left:381px;top:654px" width="8" height="12"><path d="M1 4.5V3a3 2.5 0 0 1 6 0v1.5M1 7.5V9a3 2.5 0 0 0 6 0V7.5" fill="none" stroke="#cfcfcf" stroke-width="1.3"/></svg>
<div class="a" style="left:25px;top:672px;width:447px;height:20px;background:#4a4a4a;border-radius:3px"></div>
<div class="a" style="left:407px;top:672px;width:65px;height:20px;background:#4a4a4a;border-radius:0 3px 3px 0"></div>
<div class="a" style="left:30.3px;top:677.2px;width:9.4px;height:9.4px;border:1.6px solid #7a7a7a;border-radius:50%"></div>
<div class="t" style="left:46px;top:675px;color:#e8e8e8;font-size:12.2px;">Size</div>
<div class="a" style="left:177px;top:674px;width:94px;height:16px;background:#262626;border-radius:2px"></div>
<div class="t" style="left:181px;top:675px;color:#777;font-size:12px;">W</div>
<div class="t" style="left:194px;top:675px;color:#e8e8e8;font-size:12px;">650.0</div>
<div class="a" style="left:277px;top:674px;width:94px;height:16px;background:#262626;border-radius:2px"></div>
<div class="t" style="left:281px;top:675px;color:#777;font-size:12px;">H</div>
<div class="t" style="left:294px;top:675px;color:#e8e8e8;font-size:12px;">650.0</div>
<div class="a" style="left:378px;top:674px;width:15px;height:16px;background:#2a2a2a;border-radius:3px;border:1px solid #222"></div>
<svg class="a" style="left:381px;top:676px" width="8" height="12"><path d="M1 4.5V3a3 2.5 0 0 1 6 0v1.5M1 7.5V9a3 2.5 0 0 0 6 0V7.5" fill="none" stroke="#3cc464" stroke-width="1.3"/></svg>
<div class="a" style="left:30.3px;top:699.2px;width:9.4px;height:9.4px;border:1.6px solid #777;border-radius:50%"></div>
<div class="t" style="left:46px;top:697px;color:#e0e0e0;font-size:12.2px;">Pattern Offset</div>
<div class="a" style="left:177px;top:696px;width:94px;height:16px;background:#262626;border-radius:2px"></div>
<div class="t" style="left:181px;top:697px;color:#777;font-size:12px;">X</div>
<div class="t" style="left:194px;top:697px;color:#e8e8e8;font-size:12px;">0.0</div>
<div class="a" style="left:277px;top:696px;width:94px;height:16px;background:#262626;border-radius:2px"></div>
<div class="t" style="left:281px;top:697px;color:#777;font-size:12px;">Y</div>
<div class="t" style="left:294px;top:697px;color:#e8e8e8;font-size:12px;">0.0</div>
<div class="a" style="left:20px;top:667px;width:390px;height:31px;border:3px solid #b6e41c"></div>
<div class="a" style="left:30.3px;top:721.2px;width:9.4px;height:9.4px;border:1.6px solid #777;border-radius:50%"></div>
<div class="t" style="left:46px;top:719px;color:#e0e0e0;font-size:12.2px;">Size Mode</div>
<div class="a" style="left:177px;top:718px;width:193px;height:17px;background:#4e4e4e;border-radius:3px"></div>
<div class="t" style="left:180px;top:719px;color:#eee;font-size:12px;">Fit</div>
<svg class="a" style="left:355px;top:723px" width="10" height="6"><path d="M0.5 0.5L5 5L9.5 0.5" fill="none" stroke="#ccc" stroke-width="1.1"/></svg>
<div class="a" style="left:30.3px;top:743.2px;width:9.4px;height:9.4px;border:1.6px solid #777;border-radius:50%"></div>
<div class="t" style="left:46px;top:741px;color:#e0e0e0;font-size:12.2px;">Direction</div>
<div class="a" style="left:177px;top:739px;width:185px;height:19px;background:#505050;border-radius:3px;border:1px solid #3a3a3a"></div>
<div class="a" style="left:178px;top:740px;width:99px;height:17px;background:#2a2a2a;border-radius:3px"></div>
<svg class="a" style="left:182px;top:743px" width="14" height="11"><path d="M1 2h11M12 2L2 9M2 9h11" fill="none" stroke="#3cc464" stroke-width="1.6"/></svg>
<div class="t" style="left:200px;top:741px;color:#e8e8e8;font-size:12.2px;">Flow Columns</div>
<svg class="a" style="left:286px;top:742px" width="12" height="13"><path d="M2 1v11M10 1v11M3 11L9 2" fill="none" stroke="#aaa" stroke-width="1.3"/></svg>
<div class="t" style="left:302px;top:741px;color:#dcdcdc;font-size:12.2px;">Flow Rows</div>
<div class="a" style="left:14.3px;top:771.2px;width:9.4px;height:9.4px;border:1.6px solid #777;border-radius:50%"></div>
<div class="t" style="left:30px;top:769px;color:#e0e0e0;font-size:12.2px;">Shape Position</div>
<div class="a" style="left:177px;top:768px;width:94px;height:16px;background:#262626;border-radius:2px"></div>
<div class="t" style="left:181px;top:769px;color:#777;font-size:12px;">X</div>
<div class="t" style="left:194px;top:769px;color:#e8e8e8;font-size:12px;">0.0</div>
<div class="a" style="left:277px;top:768px;width:94px;height:16px;background:#262626;border-radius:2px"></div>
<div class="t" style="left:281px;top:769px;color:#777;font-size:12px;">Y</div>
<div class="t" style="left:294px;top:769px;color:#e8e8e8;font-size:12px;">0.0</div>
<div class="a" style="left:14.3px;top:793.2px;width:9.4px;height:9.4px;border:1.6px solid #777;border-radius:50%"></div>
<div class="t" style="left:30px;top:791px;color:#e0e0e0;font-size:12.2px;">Shape Rotation</div>
<div class="a" style="left:177px;top:790px;width:94px;height:16px;background:#262626;border-radius:2px"></div>
<div class="t" style="left:181px;top:791px;color:#555;font-size:12px;">#</div>
<div class="t" style="left:194px;top:791px;color:#e8e8e8;font-size:12px;">0.0</div>
<div class="a" style="left:14.3px;top:815.2px;width:9.4px;height:9.4px;border:1.6px solid #777;border-radius:50%"></div>
<div class="t" style="left:30px;top:813px;color:#e0e0e0;font-size:12.2px;">Shape Scale</div>
<div class="a" style="left:177px;top:812px;width:94px;height:16px;background:#262626;border-radius:2px"></div>
<div class="t" style="left:181px;top:813px;color:#777;font-size:12px;">X</div>
<div class="t" style="left:194px;top:813px;color:#e8e8e8;font-size:12px;">1.0</div>
<div class="a" style="left:277px;top:812px;width:94px;height:16px;background:#262626;border-radius:2px"></div>
<div class="t" style="left:281px;top:813px;color:#777;font-size:12px;">Y</div>
<div class="t" style="left:294px;top:813px;color:#e8e8e8;font-size:12px;">1.0</div>
<div class="a" style="left:378px;top:812px;width:15px;height:16px;background:#2a2a2a;border-radius:3px;border:1px solid #222"></div>
<svg class="a" style="left:381px;top:814px" width="8" height="12"><path d="M1 4.5V3a3 2.5 0 0 1 6 0v1.5M1 7.5V9a3 2.5 0 0 0 6 0V7.5" fill="none" stroke="#cfcfcf" stroke-width="1.3"/></svg>
<div class="a" style="left:14.3px;top:837.2px;width:9.4px;height:9.4px;border:1.6px solid #777;border-radius:50%"></div>
<div class="t" style="left:30px;top:835px;color:#e0e0e0;font-size:12.2px;">Shape Skew</div>
<div class="a" style="left:177px;top:834px;width:94px;height:16px;background:#262626;border-radius:2px"></div>
<div class="t" style="left:181px;top:835px;color:#777;font-size:12px;">X</div>
<div class="t" style="left:194px;top:835px;color:#e8e8e8;font-size:12px;">0.0</div>
<div class="a" style="left:277px;top:834px;width:94px;height:16px;background:#262626;border-radius:2px"></div>
<div class="t" style="left:281px;top:835px;color:#777;font-size:12px;">Y</div>
<div class="t" style="left:294px;top:835px;color:#e8e8e8;font-size:12px;">0.0</div>
<div class="a" style="left:14.3px;top:859.2px;width:9.4px;height:9.4px;border:1.6px solid #777;border-radius:50%"></div>
<div class="t" style="left:30px;top:857px;color:#e0e0e0;font-size:12.2px;">Shape Visibility</div>
<div class="a" style="left:177px;top:856px;width:16px;height:16px;background:#2c2c2c;border-radius:3px"></div>
<svg class="a" style="left:178px;top:858px" width="14" height="12"><path d="M2 6.5L5.2 9.5L12 2" fill="none" stroke="#3cc464" stroke-width="2"/></svg>
<div class="a" style="left:14.3px;top:881.2px;width:9.4px;height:9.4px;border:1.6px solid #777;border-radius:50%"></div>
<div class="t" style="left:30px;top:879px;color:#e0e0e0;font-size:12.2px;">Shape Opacity</div>
<div class="a" style="left:177px;top:884px;width:189px;height:4px;background:#e6e6e6;border-radius:2px"></div>
<div class="a" style="left:361px;top:881px;width:10px;height:10px;border-radius:50%;background:#5fc0a0;border:1px solid #86d0b8"></div>
<div class="a" style="left:377px;top:878px;width:94px;height:16px;background:#262626;border-radius:2px"></div>
<div class="t" style="left:381px;top:879px;color:#777;font-size:12px;">%</div>
<div class="t" style="left:394px;top:879px;color:#e8e8e8;font-size:12px;">100.0</div>
<div class="a" style="left:14.3px;top:903.2px;width:9.4px;height:9.4px;border:1.6px solid #777;border-radius:50%"></div>
<div class="t" style="left:30px;top:901px;color:#e0e0e0;font-size:12.2px;">Auto Id</div>
<div class="a" style="left:177px;top:900px;width:16px;height:16px;background:#2c2c2c;border-radius:3px"></div>
<svg class="a" style="left:178px;top:902px" width="14" height="12"><path d="M2 6.5L5.2 9.5L12 2" fill="none" stroke="#3cc464" stroke-width="2"/></svg>
<div class="a" style="left:14.3px;top:925.2px;width:9.4px;height:9.4px;border:1.6px solid #777;border-radius:50%"></div>
<div class="t" style="left:30px;top:923px;color:#888;font-size:12.2px;">Shape Id</div>
<div class="a" style="left:177px;top:922px;width:94px;height:16px;background:#262626;border-radius:2px"></div>
<div class="t" style="left:181px;top:923px;color:#555;font-size:12px;">#</div>
<div class="t" style="left:194px;top:923px;color:#999;font-size:12px;">0</div>
<div class="a" style="left:14.3px;top:947.2px;width:9.4px;height:9.4px;border:1.6px solid #777;border-radius:50%"></div>
<div class="t" style="left:30px;top:945px;color:#e0e0e0;font-size:12.2px;">Shape Time Offset</div>
<div class="a" style="left:177px;top:944px;width:94px;height:16px;background:#262626;border-radius:2px"></div>
<div class="t" style="left:181px;top:945px;color:#555;font-size:12px;">#</div>
<div class="t" style="left:194px;top:945px;color:#e8e8e8;font-size:12px;">0.0</div>
<div class="a" style="left:6px;top:963px;width:468px;height:4px;background:#262626;"></div>
<div class="a" style="left:6px;top:967px;width:468px;height:23px;background:#3a3a3a;"></div>
<div class="a" style="left:6px;top:967px;width:468px;height:2px;background:#f0dc78;"></div>
<div class="a" style="left:6px;top:967px;width:4px;height:23px;background:#f0dc78;"></div>
<div class="a" style="left:470px;top:967px;width:4px;height:23px;background:#f0dc78;"></div>
<svg class="a" style="left:15px;top:976px" width="9" height="5"><path d="M0.5 0.5L4.5 4.5L8.5 0.5" fill="none" stroke="#bbb" stroke-width="1"/></svg>
<div class="a" style="left:28px;top:970px;width:18px;height:17px;background:#2a2a2a;border-radius:2px"></div>
<div class="a" style="left:50.3px;top:974.2px;width:9.4px;height:9.4px;border:1.6px solid #777;border-radius:50%"></div>
<div class="a" style="left:67px;top:973px;width:11px;height:11px;border:1px dashed #f0dc78"></div>
<div class="t" style="left:87px;top:972px;color:#e8e8e8;font-size:12.3px;">Ellipse Shape</div>
<div class="a" style="left:365px;top:971px;width:17px;height:17px;background:#2a2a2a;border-radius:4px;border:1px solid #242424"></div>
<div class="a" style="left:386px;top:971px;width:21px;height:17px;background:#2a2a2a;border-radius:4px;border:1px solid #242424"></div>
<div class="a" style="left:411px;top:971px;width:16px;height:17px;background:#2a2a2a;border-radius:4px;border:1px solid #242424"></div>
<div class="a" style="left:431px;top:971px;width:16px;height:17px;background:#2a2a2a;border-radius:4px;border:1px solid #242424"></div>
<div class="a" style="left:451px;top:971px;width:16px;height:17px;background:#2a2a2a;border-radius:4px;border:1px solid #242424"></div>
<svg class="a" style="left:368px;top:974px" width="13" height="11"><path d="M0 1.5h5M0 5.5h4M0 9.5h5M5 1.5v8M5 5.5h7" stroke="#e0e0e0" stroke-width="1.6" fill="none"/></svg>
<svg class="a" style="left:388px;top:975px" width="18" height="9"><path d="M1 4.5L4 1h3v7H4z" fill="#d6c070"/><path d="M11 1h3l3 3.5L14 8h-3z" fill="#c050f0"/></svg>
<svg class="a" style="left:414px;top:973px" width="10" height="14"><path d="M2 0.5h6v1.5L7 3v3l2 2H1l2-2V3L2 2z" fill="#ddd"/><path d="M5 8v5.5" stroke="#ddd" stroke-width="1.2"/></svg>
<svg class="a" style="left:433px;top:973px" width="13" height="13"><circle cx="2" cy="2" r="1" fill="#ccc"/><circle cx="8" cy="2" r="1" fill="#ccc"/><circle cx="2" cy="7.5" r="1" fill="#ccc"/><path d="M7.5 4.5v8M3.5 8.5h8" stroke="#ddd" stroke-width="1.5"/><path d="M10 13l3-3v3z" fill="#7ac8b0"/></svg>
<svg class="a" style="left:454px;top:974px" width="11" height="11"><path d="M0.5 0.5L10.5 10.5M10.5 0.5L0.5 10.5" stroke="#ddd" stroke-width="1.1"/></svg>
<div class="a" style="left:6px;top:990px;width:468px;height:34px;background:#262626;"></div>
<div class="a" style="left:6px;top:990px;width:1px;height:34px;background:#3cc464;"></div>
<div class="t" style="left:39px;top:994px;color:#c8c8c8;font-size:12.3px;">Shape</div>
<div class="a" style="left:102px;top:992px;width:93px;height:21px;background:#404040;border-radius:4px 4px 0 0"></div>
<div class="a" style="left:108px;top:997px;width:11px;height:11px;background:#8a50f0;border:1px solid #222"></div>
<div class="t" style="left:143px;top:994px;color:#e8e8e8;font-size:12.3px;">Fill</div>
<div class="a" style="left:200px;top:996px;width:12px;height:12px;background:#2a2a2a;"></div>
<svg class="a" style="left:200px;top:996px" width="12" height="12"><path d="M1 11L11 1" stroke="#c04040" stroke-width="1"/></svg>
<div class="t" style="left:228px;top:994px;color:#c8c8c8;font-size:12.3px;">Stroke</div>
<div class="a" style="left:287px;top:996px;width:1px;height:11px;background:#aaa;"></div>
<div class="t" style="left:316px;top:994px;color:#c8c8c8;font-size:12.3px;">Masks</div>
<div class="a" style="left:380px;top:996px;width:1px;height:11px;background:#aaa;"></div>
<div class="t" style="left:398px;top:994px;color:#c8c8c8;font-size:12.3px;">Advanced</div>
<div class="a" style="left:7px;top:1013px;width:467px;height:11px;background:#3a3a3a;border-radius:4px 4px 0 0"></div>
<div class="a" style="left:7px;top:1013px;width:467px;height:11px;overflow:hidden"><div class="t" style="left:23px;top:5px;color:#e0e0e0;font-size:12.2px">Fill</div></div>
<div class="a" style="left:177px;top:1014px;width:16px;height:10px;overflow:hidden"><div class="a" style="left:0px;top:0px;width:16px;height:16px;background:#2c2c2c;border-radius:3px"></div>
<svg class="a" style="left:1px;top:2px" width="14" height="12"><path d="M2 6.5L5.2 9.5L12 2" fill="none" stroke="#3cc464" stroke-width="2"/></svg>
</div>

<!-- TOOL COLUMN -->
<div class="a" style="left:494px;top:85px;width:30px;height:495px;background:#444;"></div>
<div class="a" style="left:494px;top:85px;width:30px;height:10px;background:#3c3c3c;"></div>
<div class="a" style="left:503px;top:89px;width:2px;height:2px;background:#888;box-shadow:5px 0 #888,10px 0 #888"></div>
<div class="a" style="left:495px;top:96px;width:28px;height:28px;background:#151515;border-radius:4px"></div>
<svg class="a" style="left:502px;top:99px" width="16" height="20"><path d="M2.5 1.5V15.5L6 12L8.5 17.5L11 16.5L8.8 11H13.5z" fill="none" stroke="#3cc464" stroke-width="1.3" stroke-linejoin="round"/></svg>
<svg class="a" style="left:503px;top:130px" width="14" height="21"><path d="M1 1V20L6 14.5H13z" fill="#dedede"/></svg>
<svg class="a" style="left:500px;top:161px" width="18" height="18"><path d="M0.5 2Q8.5 2.5 12.5 5.5L14.5 9L11 13L7.5 12.5Q2.5 7.5 0.5 2z" fill="#dedede"/><path d="M0.8 2.3L7.6 8.2" stroke="#555" stroke-width="0.8"/><circle cx="8" cy="8.5" r="1.3" fill="#444"/><path d="M12 11.2L15.8 15L13.6 17.2L9.8 13.4z" fill="#dedede"/></svg>
<svg class="a" style="left:499px;top:190px" width="20" height="21"><path d="M2.5 15.5L13.5 4.5L16.5 7.5L5.5 18.5z" fill="#dedede"/><path d="M0.5 20.5L2 16.5L4.5 19z" fill="#dedede"/><circle cx="16" cy="4.2" r="2.4" fill="#dedede"/></svg>
<svg class="a" style="left:498px;top:222px" width="22" height="15"><rect x="1" y="3" width="13" height="10" rx="1" fill="#dedede"/><rect x="2" y="0.5" width="8" height="2" fill="#dedede"/><path d="M15 8L20.5 4V12z" fill="#dedede"/><circle cx="4" cy="6" r="1.2" fill="#444"/></svg>
<svg class="a" style="left:500px;top:251px" width="18" height="18"><path d="M1 17L17 1" stroke="#dedede" stroke-width="1.2"/></svg>
<svg class="a" style="left:501px;top:281px" width="16" height="17"><path d="M1 1h14v3.5h-1.5V3H9.5v12.5h2V17h-7v-1.5h2V3H2.5v1.5H1z" fill="#dedede"/></svg>
<svg class="a" style="left:499px;top:310px" width="20" height="20"><path d="M1 1L1 9L3 7L6 6z" fill="#dedede"/><path d="M7 2.5h10M17.5 3v15M1.5 18.5h16M2.5 11v7" stroke="#dedede" stroke-width="1.1" stroke-dasharray="2 1.2" fill="none"/></svg>
<div class="a" style="left:502px;top:343px;width:15px;height:14px;background:#dedede;"></div>
<div class="a" style="left:501px;top:372px;width:16px;height:16px;background:#dedede;border-radius:50%"></div>
<svg class="a" style="left:500px;top:401px" width="18" height="17"><path d="M9 1L17 6.5L14 16H4L1 6.5z" fill="#dedede"/></svg>
<svg class="a" style="left:500px;top:431px" width="18" height="17"><path d="M9 0.5L11.3 6H17.3L12.5 9.7L14.3 16L9 12.3L3.7 16L5.5 9.7L0.7 6H6.7z" fill="#dedede"/></svg>
<svg class="a" style="left:500px;top:461px" width="18" height="17"><path d="M4.5 14.5A6.5 6.5 0 1 1 15.5 9" fill="none" stroke="#dedede" stroke-width="3"/></svg>
<svg class="a" style="left:500px;top:490px" width="18" height="19"><path d="M9 0.5Q10 8 17.5 9.5Q10 11 9 18.5Q8 11 0.5 9.5Q8 8 9 0.5z" fill="#dedede"/></svg>
<svg class="a" style="left:500px;top:521px" width="18" height="18"><circle cx="9" cy="9" r="5.5" fill="none" stroke="#dedede" stroke-width="3.5"/><path d="M9 0.5v3M9 14.5v3M0.5 9h3M14.5 9h3M3 3l2.2 2.2M12.8 12.8L15 15M3 15l2.2-2.2M12.8 5.2L15 3" stroke="#dedede" stroke-width="2.8"/></svg>
<svg class="a" style="left:503px;top:565px" width="12" height="11"><path d="M1 1L5 5.5L1 10M6 1L10 5.5L6 10" fill="none" stroke="#aaa" stroke-width="1.1"/></svg>
<div class="a" style="left:530px;top:85px;width:87px;height:22px;background:#444;border-radius:3px 3px 0 0"></div>
<div class="t" style="left:535px;top:89px;color:#e0e0e0;font-size:12.2px;">Composition 3</div>
<div class="a" style="left:530px;top:107px;width:1057px;height:451px;background:#000;"></div>
<div class="a" style="left:694px;top:127px;width:729px;height:410px;background:#00afff;"></div>
<div class="a" style="left:889.0px;top:162.5px;width:91px;height:91px;border-radius:50%;background:#ff7052"></div>
<svg class="a" style="left:924.5px;top:197.85px" width="20" height="22"><path d="M12.8 3.2C11.8 2.7 10.6 2.5 9.3 2.5C5.2 2.5 2.75 5.6 2.75 11C2.75 16.6 5 19.5 9.2 19.5C13 19.5 15.75 17.3 15.75 14.1C15.75 10.9 13.2 8.8 9.6 8.8C6 8.8 3.2 10.8 3 14" fill="none" stroke="#fff" stroke-width="2.7" stroke-linejoin="miter"/></svg>
<div class="a" style="left:1012.5px;top:162.5px;width:91px;height:91px;border-radius:50%;background:#ff52b8"></div>
<svg class="a" style="left:1048px;top:197.85px" width="20" height="22"><path d="M1.9 6.4V2.6H14.7L7.3 19.6" fill="none" stroke="#fff" stroke-width="2.7" stroke-linejoin="miter"/></svg>
<div class="a" style="left:1136.0px;top:162.5px;width:91px;height:91px;border-radius:50%;background:#ff5262"></div>
<svg class="a" style="left:1171.5px;top:197.85px" width="20" height="22"><path d="M8.65 2.5A5.3 4.2 0 1 0 8.65 10.9A5.3 4.2 0 1 0 8.65 2.5zM8.65 10.1A6.5 4.7 0 1 0 8.65 19.5A6.5 4.7 0 1 0 8.65 10.1z" fill="none" stroke="#fff" stroke-width="2.7" stroke-linejoin="miter"/></svg>
<div class="a" style="left:889.0px;top:286.0px;width:91px;height:91px;border-radius:50%;background:#8f52ff"></div>
<svg class="a" style="left:924.5px;top:321.35px" width="20" height="22"><path d="M2.6 2.6H13.4L7.6 9.4C11.6 9.3 14.2 11.2 14.2 14.5C14.2 17.6 11.8 19.5 8.1 19.5C5.6 19.5 3.4 18.6 2 17.1" fill="none" stroke="#fff" stroke-width="2.7" stroke-linejoin="miter"/></svg>
<div class="a" style="left:1012.5px;top:286.0px;width:91px;height:91px;border-radius:50%;background:#52ffb0"></div>
<div class="a" style="left:1136.0px;top:286.0px;width:91px;height:91px;border-radius:50%;background:#ff52bc"></div>
<svg class="a" style="left:1171.5px;top:321.35px" width="20" height="22"><path d="M13.2 2.6H5.1L4.2 9.6C5.2 9.4 6.4 9.3 7.8 9.3C12.1 9.3 14.7 11.3 14.7 14.4C14.7 17.6 12.2 19.5 8.4 19.5C5.9 19.5 3.8 18.7 2.4 17.2" fill="none" stroke="#fff" stroke-width="2.7" stroke-linejoin="miter"/></svg>
<div class="a" style="left:889.0px;top:409.8px;width:91px;height:91px;border-radius:50%;background:#8f52ff"></div>
<svg class="a" style="left:924.5px;top:445.15000000000003px" width="20" height="22"><path d="M10 2.5A7.6 8.5 0 1 0 10 19.5A7.6 8.5 0 1 0 10 2.5z" fill="none" stroke="#fff" stroke-width="2.7" stroke-linejoin="miter"/></svg>
<div class="a" style="left:1012.5px;top:409.8px;width:91px;height:91px;border-radius:50%;background:#ff5262"></div>
<svg class="a" style="left:1048px;top:445.15000000000003px" width="20" height="22"><path d="M0.3 2.6H7.6V19.6" fill="none" stroke="#fff" stroke-width="2.7" stroke-linejoin="miter"/></svg>
<div class="a" style="left:1136.0px;top:409.8px;width:91px;height:91px;border-radius:50%;background:#52a0ff"></div>
<svg class="a" style="left:1171.5px;top:445.15000000000003px" width="20" height="22"><path d="M2.4 6.2C2.6 3.6 4.8 2.3 8 2.3C11.3 2.3 13.6 4 13.6 6.9C13.6 8.7 12.8 10 10.6 12.1L2.8 19.5H14.5" fill="none" stroke="#fff" stroke-width="2.7" stroke-linejoin="miter"/></svg>
<div class="a" style="left:1012.5px;top:286.5px;width:91px;height:91px;border:1px solid #3cb878"></div>
<div class="a" style="left:1009.5px;top:283.5px;width:6px;height:6px;background:#fff;border:1px solid #3cb878"></div>
<div class="a" style="left:1100.5px;top:283.5px;width:6px;height:6px;background:#fff;border:1px solid #3cb878"></div>
<div class="a" style="left:1009.5px;top:374.5px;width:6px;height:6px;background:#fff;border:1px solid #3cb878"></div>
<div class="a" style="left:1100.5px;top:374.5px;width:6px;height:6px;background:#fff;border:1px solid #3cb878"></div>
<div class="a" style="left:1049px;top:322px;width:18px;height:21px;overflow:hidden"><svg class="a" style="left:-1px;top:-0.65px" width="20" height="22"><path d="M11 19.6V2.6L2 14.2H15.5" fill="none" stroke="#fff" stroke-width="2.7"/></svg></div>
<div class="a" style="left:1049px;top:322px;width:18px;height:21px;border:1px solid #7a7a7a;background:rgba(80,255,176,0.25)"></div>
<svg class="a" style="left:1052px;top:326px" width="12" height="12"><circle cx="6" cy="6" r="4.3" fill="none" stroke="#333" stroke-width="1.2"/><circle cx="6" cy="6" r="1.5" fill="#222"/></svg>
<div class="a" style="left:1012px;top:270px;width:9px;height:9px;background:#ffe070;"></div>
<div class="t" style="left:1024px;top:267px;color:#111;font-size:12px;font-weight:normal;-webkit-text-stroke:0.3px #111">Ellipse Shape</div>
<div class="t" style="left:569px;top:460px;font-size:11.7px;color:#f0f0f0">Hold S <span style="color:#6e6e6e">Direct Layer Selection</span></div>
<div class="a" style="left:694px;top:460px;width:80px;height:16px;overflow:hidden"><div class="t" style="left:-125px;top:0;font-size:11.7px;color:transparent">Hold S <span style="color:#6a5ad8">Direct Layer Selection</span></div></div>
<div class="t" style="left:569px;top:474px;font-size:11.7px;color:#f0f0f0">Space <span style="color:#6e6e6e">Play/ Stop</span></div>
<div class="a" style="left:694px;top:474px;width:80px;height:16px;overflow:hidden"><div class="t" style="left:-125px;top:0;font-size:11.7px;color:transparent">Space <span style="color:#6a5ad8">Play/ Stop</span></div></div>
<div class="t" style="left:569px;top:488px;font-size:11.7px;color:#f0f0f0">Space + click + drag <span style="color:#6e6e6e">Pan</span></div>
<div class="a" style="left:694px;top:488px;width:80px;height:16px;overflow:hidden"><div class="t" style="left:-125px;top:0;font-size:11.7px;color:transparent">Space + click + drag <span style="color:#6a5ad8">Pan</span></div></div>
<div class="t" style="left:569px;top:502px;font-size:11.7px;color:#f0f0f0">Alt + click + drag <span style="color:#6e6e6e">Move Pivot Point</span></div>
<div class="a" style="left:694px;top:502px;width:80px;height:16px;overflow:hidden"><div class="t" style="left:-125px;top:0;font-size:11.7px;color:transparent">Alt + click + drag <span style="color:#6a5ad8">Move Pivot Point</span></div></div>
<div class="t" style="left:569px;top:516px;font-size:11.7px;color:#f0f0f0">Shift <span style="color:#6e6e6e">Enable Snapping</span></div>
<div class="a" style="left:694px;top:516px;width:80px;height:16px;overflow:hidden"><div class="t" style="left:-125px;top:0;font-size:11.7px;color:transparent">Shift <span style="color:#6a5ad8">Enable Snapping</span></div></div>
<div class="t" style="left:998px;top:536px;color:#f0f0f0;font-size:12px;">Viewport Quality: High</div>
<div class="a" style="left:530px;top:558px;width:1057px;height:22px;background:#484848;"></div>
<div class="a" style="left:535px;top:561px;width:78px;height:16px;background:#2e2e2e;border-radius:3px"></div>
<div class="t" style="left:539px;top:562px;color:#e8e8e8;font-size:12px;">38%</div>
<svg class="a" style="left:599px;top:567px" width="10" height="6"><path d="M0.5 0.5L5 5L9.5 0.5" fill="none" stroke="#ccc" stroke-width="1.1"/></svg>
<div class="a" style="left:866px;top:560px;width:100px;height:18px;background:#393939;border-radius:4px;border:1px solid #2a2a2a"></div>
<div class="a" style="left:886px;top:561px;width:1px;height:16px;background:#1e1e1e;"></div>
<div class="a" style="left:906px;top:561px;width:1px;height:16px;background:#1e1e1e;"></div>
<div class="a" style="left:926px;top:561px;width:1px;height:16px;background:#1e1e1e;"></div>
<div class="a" style="left:946px;top:561px;width:1px;height:16px;background:#1e1e1e;"></div>
<svg class="a" style="left:869px;top:563px" width="14" height="12"><path d="M1.5 1v10" stroke="#e0e0e0" stroke-width="1.6"/><path d="M12 1v10L3.5 6z" fill="#e0e0e0"/></svg>
<svg class="a" style="left:889px;top:563px" width="14" height="12"><path d="M9 1v10L1 6z" fill="#e0e0e0"/><path d="M11.5 1.5v9" stroke="#e0e0e0" stroke-width="1.6"/></svg>
<svg class="a" style="left:909px;top:563px" width="14" height="12"><path d="M3 1v10L11.5 6z" fill="#e0e0e0"/></svg>
<svg class="a" style="left:929px;top:563px" width="14" height="12"><path d="M2 1.5v9" stroke="#e0e0e0" stroke-width="1.6"/><path d="M4.5 1v10L12.5 6z" fill="#e0e0e0"/></svg>
<svg class="a" style="left:949px;top:563px" width="14" height="12"><path d="M1.5 1v10L10 6z" fill="#e0e0e0"/><path d="M11.8 1v10" stroke="#e0e0e0" stroke-width="1.6"/></svg>
<div class="a" style="left:971px;top:560px;width:20px;height:18px;background:#393939;border-radius:4px;border:1px solid #2a2a2a"></div>
<svg class="a" style="left:974px;top:562px" width="14" height="13"><path d="M7 4.5H1.5v7h11v-4" fill="none" stroke="#e0e0e0" stroke-width="1.4"/><path d="M8 1.5L12 4L8 6.5z" fill="#e0e0e0"/><path d="M5 4.5h4" stroke="#e0e0e0" stroke-width="1.4"/></svg>
<div class="a" style="left:1232px;top:560px;width:36px;height:18px;background:#393939;border-radius:4px"></div>
<svg class="a" style="left:1234px;top:565px" width="15" height="9"><path d="M4 0.5H14.5V8.5H4L0.5 4.5z" fill="#ddd"/><circle cx="5" cy="4.5" r="1.5" fill="#2c2c2c"/></svg>
<div class="t" style="left:1257px;top:562px;color:#7aa8e0;font-size:12px;">0</div>
<div class="a" style="left:1272px;top:560px;width:31px;height:18px;background:#393939;border-radius:4px;border:1px solid #2a2a2a"></div>
<div class="a" style="left:1290px;top:561px;width:1px;height:16px;background:#222;"></div>
<svg class="a" style="left:1293px;top:565px" width="7" height="8"><path d="M1 0.8V7.2L6 4z" fill="none" stroke="#888" stroke-width="0.9"/></svg>
<svg class="a" style="left:1275px;top:562px" width="15" height="14"><path d="M1 5h3l4-3.5v11L4 9H1z" fill="#3cc464"/><path d="M10 4Q12 7 10 10M12 2.5Q15 7 12 11.5" fill="none" stroke="#3cc464" stroke-width="1.2"/></svg>
<div class="a" style="left:1307px;top:560px;width:31px;height:18px;background:#393939;border-radius:4px;border:1px solid #2a2a2a"></div>
<div class="a" style="left:1325px;top:561px;width:1px;height:16px;background:#222;"></div>
<svg class="a" style="left:1328px;top:565px" width="7" height="8"><path d="M1 0.8V7.2L6 4z" fill="none" stroke="#888" stroke-width="0.9"/></svg>
<svg class="a" style="left:1310px;top:562px" width="14" height="14"><path d="M3 12L1.8 7.5A5 5 0 0 1 11 4.5" fill="none" stroke="#ddd" stroke-width="2.6"/></svg>
<div class="a" style="left:1342px;top:560px;width:31px;height:18px;background:#393939;border-radius:4px;border:1px solid #2a2a2a"></div>
<div class="a" style="left:1360px;top:561px;width:1px;height:16px;background:#222;"></div>
<svg class="a" style="left:1363px;top:565px" width="7" height="8"><path d="M1 0.8V7.2L6 4z" fill="none" stroke="#888" stroke-width="0.9"/></svg>
<svg class="a" style="left:1345px;top:562px" width="14" height="14"><path d="M4.5 0.5v13M9.5 0.5v13M0.5 4.5h13M0.5 9.5h13" stroke="#ddd" stroke-width="1.1"/></svg>
<div class="a" style="left:1377px;top:560px;width:20px;height:18px;background:#393939;border-radius:4px;border:1px solid #2a2a2a"></div>
<svg class="a" style="left:1380px;top:563px" width="15" height="11"><rect x="0.5" y="0.5" width="3" height="3" fill="#3cc464"/><rect x="0.5" y="5" width="3" height="5.5" fill="#3cc464"/><rect x="5" y="0.5" width="9.5" height="6" fill="none" stroke="#3cc464" stroke-width="1.2"/><rect x="5" y="7.5" width="9.5" height="3" fill="#3cc464"/></svg>
<div class="a" style="left:1400px;top:560px;width:20px;height:18px;background:#393939;border-radius:4px;border:1px solid #2a2a2a"></div>
<svg class="a" style="left:1403px;top:564px" width="15" height="10"><path d="M0.5 0.5L5 5L0.5 9.5z" fill="#ccc"/><path d="M5 0.5L9 5L5 9.5M9 0.5L13 5L9 9.5" fill="none" stroke="#ccc" stroke-width="1.6"/></svg>
<div class="a" style="left:1423px;top:560px;width:31px;height:18px;background:#393939;border-radius:4px;border:1px solid #2a2a2a"></div>
<div class="a" style="left:1441px;top:561px;width:1px;height:16px;background:#222;"></div>
<svg class="a" style="left:1444px;top:565px" width="7" height="8"><path d="M1 0.8V7.2L6 4z" fill="none" stroke="#888" stroke-width="0.9"/></svg>
<svg class="a" style="left:1426px;top:563px" width="14" height="12"><rect x="0.8" y="0.8" width="12.4" height="9" fill="none" stroke="#ddd" stroke-width="1.3"/><rect x="0.5" y="9.5" width="13" height="2" fill="#ddd"/></svg>
<div class="a" style="left:1458px;top:560px;width:31px;height:18px;background:#393939;border-radius:4px;border:1px solid #2a2a2a"></div>
<div class="a" style="left:1476px;top:561px;width:1px;height:16px;background:#222;"></div>
<svg class="a" style="left:1479px;top:565px" width="7" height="8"><path d="M1 0.8V7.2L6 4z" fill="none" stroke="#888" stroke-width="0.9"/></svg>
<svg class="a" style="left:1461px;top:562px" width="14" height="14"><rect x="0.8" y="0.8" width="7" height="5" fill="none" stroke="#ccc" stroke-width="1"/><path d="M9 3.5v4h-7M11 5.5v4H4M13 7.5v4H6" fill="none" stroke="#999" stroke-width="0.9"/></svg>
<div class="a" style="left:1493px;top:560px;width:31px;height:18px;background:#393939;border-radius:4px;border:1px solid #2a2a2a"></div>
<div class="a" style="left:1511px;top:561px;width:1px;height:16px;background:#222;"></div>
<svg class="a" style="left:1514px;top:565px" width="7" height="8"><path d="M1 0.8V7.2L6 4z" fill="none" stroke="#888" stroke-width="0.9"/></svg>
<svg class="a" style="left:1496px;top:562px" width="14" height="14"><rect x="0.5" y="0.5" width="8" height="8" fill="#bbb"/><rect x="5" y="5" width="8.5" height="8.5" fill="#2c2c2c" stroke="#ddd" stroke-width="1.1"/></svg>
<div class="a" style="left:1528px;top:560px;width:31px;height:18px;background:#393939;border-radius:4px;border:1px solid #2a2a2a"></div>
<div class="a" style="left:1546px;top:561px;width:1px;height:16px;background:#222;"></div>
<svg class="a" style="left:1549px;top:565px" width="7" height="8"><path d="M1 0.8V7.2L6 4z" fill="none" stroke="#888" stroke-width="0.9"/></svg>
<svg class="a" style="left:1531px;top:562px" width="13" height="13"><rect x="0.00" y="0.00" width="3.25" height="3.25" fill="#3cc464"/><rect x="0.00" y="6.50" width="3.25" height="3.25" fill="#3cc464"/><rect x="3.25" y="3.25" width="3.25" height="3.25" fill="#3cc464"/><rect x="3.25" y="9.75" width="3.25" height="3.25" fill="#3cc464"/><rect x="6.50" y="0.00" width="3.25" height="3.25" fill="#3cc464"/><rect x="6.50" y="6.50" width="3.25" height="3.25" fill="#3cc464"/><rect x="9.75" y="3.25" width="3.25" height="3.25" fill="#3cc464"/><rect x="9.75" y="9.75" width="3.25" height="3.25" fill="#3cc464"/></svg>
<div class="a" style="left:1563px;top:560px;width:20px;height:18px;background:#393939;border-radius:4px;border:1px solid #2a2a2a"></div>
<svg class="a" style="left:1566px;top:562px" width="14" height="14"><circle cx="7" cy="7" r="3.8" fill="none" stroke="#ddd" stroke-width="2.8"/><path d="M7 0.5v2.5M7 11v2.5M0.5 7h2.5M11 7h2.5M2.4 2.4l1.8 1.8M9.8 9.8l1.8 1.8M2.4 11.6l1.8-1.8M9.8 4.2l1.8-1.8" stroke="#ddd" stroke-width="2.2"/></svg>

<!-- RIGHT PANEL -->
<div class="a" style="left:1593px;top:85px;width:40px;height:22px;background:#444;border-radius:3px 3px 0 0"></div>
<div class="t" style="left:1598px;top:89px;color:#e0e0e0;font-size:12.3px;">Color</div>
<div class="a" style="left:1633px;top:85px;width:70px;height:22px;background:#262626;border-radius:3px 3px 0 0"></div>
<div class="t" style="left:1639px;top:89px;color:#e0e0e0;font-size:11.6px;">Add Layers</div>
<div class="a" style="left:1593px;top:107px;width:320px;height:377px;background:#464646;"></div>
<div class="a" style="left:1900px;top:107px;width:13px;height:377px;background:#3c3c3c;"></div>
<div class="a" style="left:1900px;top:107px;width:1px;height:377px;background:#383838;"></div>
<div class="a" style="left:1902px;top:153px;width:10px;height:304px;background:#535353;border-radius:5px"></div>
<div class="a" style="left:1593px;top:107px;width:307px;height:160px;overflow:hidden"><div class="a" style="left:53px;top:-47px;width:200px;height:200px;border-radius:50%;background:conic-gradient(from 90deg,#ff0000,#ff00ff 60deg,#0000ff 120deg,#00ffff 180deg,#00ff00 240deg,#ffff00 300deg,#ff0000 360deg)"></div><div class="a" style="left:78px;top:-22px;width:150px;height:150px;border-radius:50%;background:#464646"></div></div>
<div class="a" style="left:1702px;top:116px;width:90px;height:90px;background:linear-gradient(to right,#000,rgba(0,0,0,0)),linear-gradient(to bottom,#fff,#ff4fbf 55%,#b00070);"></div>
<div class="a" style="left:1785.5px;top:171.5px;width:13px;height:13px;border:1.3px solid #eee;border-radius:50%"></div>
<div class="a" style="left:1807px;top:207.5px;width:13px;height:13px;border:1.3px solid #eee;border-radius:50%"></div>
<div class="a" style="left:1600px;top:273px;width:22px;height:21px;background:#ff4fbf;border-radius:3px"></div>
<div class="t" style="left:1625px;top:277px;color:#e8e8e8;font-size:12.3px;">Hot Pink</div>
<div class="a" style="left:1871px;top:273px;width:22px;height:21px;background:#2c2c2c;border-radius:4px;border:1px solid #262626"></div>
<svg class="a" style="left:1874px;top:276px" width="16" height="15"><path d="M2 13.5L9 6.5" stroke="#ccc" stroke-width="2.2"/><path d="M2.8 12.7L8.6 6.9" stroke="#333" stroke-width="0.8"/><path d="M8 4.5L12 1.5L14 3.5L11 7.5z" fill="#ddd"/><path d="M7 5.5L10 8.5" stroke="#ddd" stroke-width="1.6"/></svg>
<div class="a" style="left:1600px;top:301px;width:49px;height:17px;background:#3c3c3c;border-radius:3px;border:1px solid #333"></div>
<div class="t" style="left:1603px;top:302px;color:#e0e0e0;font-size:12px;">Hex</div>
<svg class="a" style="left:1634px;top:307px" width="9" height="6"><path d="M0.5 0.5L4.5 4.5L8.5 0.5" fill="none" stroke="#bbb" stroke-width="1"/></svg>
<div class="a" style="left:1653px;top:298px;width:240px;height:21px;background:#262626;border-radius:3px"></div>
<div class="t" style="left:1657px;top:302px;color:#555;font-size:11px;">#</div>
<div class="t" style="left:1670px;top:302px;color:#e0e0e0;font-size:12px;">fd4fbf</div>
<div class="a" style="left:1600px;top:330px;width:238px;height:4px;background:#e6e6e6;border-radius:2px"></div>
<div class="a" style="left:1828px;top:326px;width:11px;height:11px;border-radius:50%;background:#5fc0a0;border:1px solid #86d0b8"></div>
<div class="a" style="left:1849px;top:324px;width:44px;height:16px;background:#2a2a2a;border-radius:3px"></div>
<div class="t" style="left:1852px;top:325px;color:#555;font-size:12px;">A</div>
<div class="t" style="left:1866px;top:325px;color:#e8e8e8;font-size:12px;">255</div>
<div class="a" style="left:1597px;top:345px;width:299px;height:139px;background:#262626;"></div>
<div class="a" style="left:1599px;top:347px;width:148px;height:21px;background:#404040;border-radius:4px 4px 0 0"></div>
<div class="t" style="left:1648px;top:351px;color:#e8e8e8;font-size:12.3px;">Swatches</div>
<div class="t" style="left:1786px;top:351px;color:#c8c8c8;font-size:12.3px;">Generator</div>
<div class="a" style="left:1597px;top:368px;width:299px;height:24px;background:#464646;"></div>
<div class="a" style="left:1599px;top:371px;width:257px;height:18px;background:#505050;border-radius:4px"></div>
<div class="a" style="left:1600px;top:372px;width:61px;height:16px;background:#2a2a2a;border-radius:3px"></div>
<svg class="a" style="left:1605px;top:375px" width="13" height="10"><path d="M1 0v10M4 0v10M7 0L11 10" stroke="#3cc464" stroke-width="1.6"/></svg>
<div class="t" style="left:1621px;top:373px;color:#e8e8e8;font-size:12.3px;">Library</div>
<svg class="a" style="left:1670px;top:374px" width="12" height="12"><path d="M1 3h10v8H1z" fill="none" stroke="#ccc" stroke-width="1.2"/><path d="M3 1h6M3 5.5h6M3 8h6" stroke="#ccc" stroke-width="1"/></svg>
<div class="t" style="left:1686px;top:373px;color:#e0e0e0;font-size:12.3px;">Project</div>
<svg class="a" style="left:1738px;top:373px" width="10" height="13"><path d="M1 1h5l3 3v8H1z" fill="none" stroke="#ccc" stroke-width="1.1"/></svg>
<div class="t" style="left:1752px;top:373px;color:#e0e0e0;font-size:12.3px;">Scene</div>
<svg class="a" style="left:1800px;top:374px" width="12" height="12"><path d="M6 1h4.5a.5.5 0 0 1 .5.5V6a5 5 0 1 1-5-5z" fill="none" stroke="#ccc" stroke-width="1.1"/></svg>
<div class="t" style="left:1816px;top:373px;color:#e0e0e0;font-size:12.3px;">Labels</div>
<div class="a" style="left:1857px;top:371px;width:38px;height:18px;background:#505050;border-radius:4px"></div>
<div class="a" style="left:1859px;top:372px;width:16px;height:16px;background:#2a2a2a;border-radius:3px"></div>
<svg class="a" style="left:1862px;top:375px" width="10" height="10"><rect x="0" y="0" width="4" height="4" fill="#3cc464"/><rect x="6" y="0" width="4" height="4" fill="#3cc464"/><rect x="0" y="6" width="4" height="4" fill="#3cc464"/><rect x="6" y="6" width="4" height="4" fill="#3cc464"/></svg>
<svg class="a" style="left:1880px;top:375px" width="12" height="10"><path d="M0 1h12M0 5h12M0 9h12" stroke="#ddd" stroke-width="1.2"/></svg>
<div class="a" style="left:1597px;top:392px;width:299px;height:18px;background:#464646;"></div>
<div class="a" style="left:1599px;top:392px;width:274px;height:17px;background:#505050;border-radius:3px;border:1px solid #444"></div>
<div class="t" style="left:1601px;top:394px;color:#eee;font-size:12.3px;">new</div>
<svg class="a" style="left:1859px;top:398px" width="10" height="6"><path d="M0.5 0.5L5 5L9.5 0.5" fill="none" stroke="#ccc" stroke-width="1.1"/></svg>
<div class="a" style="left:1880px;top:400px;width:2px;height:2px;background:#ddd;box-shadow:5px 0 #ddd,10px 0 #ddd"></div>
<div class="a" style="left:1597px;top:410px;width:2px;height:74px;background:#464646;"></div>
<div class="a" style="left:1894px;top:410px;width:2px;height:74px;background:#464646;"></div>
<div class="a" style="left:1600px;top:412px;width:18px;height:18px;background:#8f52ff;border-radius:3px"></div>
<div class="a" style="left:1622px;top:412px;width:18px;height:18px;background:#52a0ff;border-radius:3px"></div>
<div class="a" style="left:1644px;top:412px;width:18px;height:18px;background:#ff7052;border-radius:3px"></div>
<div class="a" style="left:1666px;top:412px;width:18px;height:18px;background:#52ffb0;border-radius:3px"></div>
<div class="a" style="left:1688px;top:412px;width:18px;height:18px;background:#ff5262;border-radius:3px"></div>
<div class="a" style="left:1710px;top:412px;width:18px;height:18px;background:#ff52bc;border-radius:3px"></div>
<div class="a" style="left:1593px;top:484px;width:320px;height:6px;background:#1c1c1c;"></div>
<div class="a" style="left:1593px;top:490px;width:38px;height:22px;background:#444;border-radius:3px 3px 0 0"></div>
<div class="t" style="left:1598px;top:494px;color:#e0e0e0;font-size:12.3px;">Align</div>
<div class="a" style="left:1593px;top:512px;width:320px;height:68px;background:#444;"></div>
<div class="t" style="left:1601px;top:525px;color:#e0e0e0;font-size:12.3px;">Alignment</div>
<div class="t" style="left:1601px;top:553px;color:#e0e0e0;font-size:12.3px;">Distribution</div>
<div class="a" style="left:1790px;top:522px;width:54px;height:18px;background:#2a2a2a;border-radius:4px;border:1px solid #222"></div>
<div class="a" style="left:1808px;top:523px;width:1px;height:16px;background:#444;"></div>
<div class="a" style="left:1826px;top:523px;width:1px;height:16px;background:#444;"></div>
<div class="a" style="left:1852px;top:522px;width:54px;height:18px;background:#2a2a2a;border-radius:4px;border:1px solid #222"></div>
<div class="a" style="left:1870px;top:523px;width:1px;height:16px;background:#444;"></div>
<div class="a" style="left:1888px;top:523px;width:1px;height:16px;background:#444;"></div>
<div class="a" style="left:1790px;top:550px;width:54px;height:18px;background:#2a2a2a;border-radius:4px;border:1px solid #222"></div>
<div class="a" style="left:1808px;top:551px;width:1px;height:16px;background:#444;"></div>
<div class="a" style="left:1826px;top:551px;width:1px;height:16px;background:#444;"></div>
<svg class="a" style="left:1793px;top:525px" width="12" height="12"><path d="M1 0v12" stroke="#ddd" stroke-width="1.2"/><path d="M3 3.5h6M3 8h9" stroke="#ddd" stroke-width="2"/></svg>
<svg class="a" style="left:1811px;top:525px" width="12" height="12"><path d="M6 0v12" stroke="#ddd" stroke-width="1.2"/><path d="M2 3.5h8M0.5 8h11" stroke="#ddd" stroke-width="2"/></svg>
<svg class="a" style="left:1829px;top:525px" width="12" height="12"><path d="M11 0v12" stroke="#ddd" stroke-width="1.2"/><path d="M3 3.5h6M0 8h9" stroke="#ddd" stroke-width="2"/></svg>
<svg class="a" style="left:1855px;top:525px" width="12" height="12"><path d="M0 1h12" stroke="#ddd" stroke-width="1.2"/><path d="M3.5 3v6M8 3v9" stroke="#ddd" stroke-width="2"/></svg>
<svg class="a" style="left:1873px;top:525px" width="12" height="12"><path d="M0 6h12" stroke="#ddd" stroke-width="1.2"/><path d="M3.5 2v8M8 0.5v11" stroke="#ddd" stroke-width="2"/></svg>
<svg class="a" style="left:1891px;top:525px" width="12" height="12"><path d="M0 11h12" stroke="#ddd" stroke-width="1.2"/><path d="M3.5 3v7M8 0v10" stroke="#ddd" stroke-width="2"/></svg>
<svg class="a" style="left:1793px;top:553px" width="12" height="12"><path d="M1 0v12M11 0v12" stroke="#ddd" stroke-width="1.2"/><path d="M5 2v9" stroke="#ddd" stroke-width="2.2"/></svg>
<svg class="a" style="left:1811px;top:553px" width="12" height="12"><path d="M0 1h12M0 11h12" stroke="#ddd" stroke-width="1.2"/><path d="M2 6h8" stroke="#ddd" stroke-width="2.2"/></svg>
<svg class="a" style="left:1829px;top:553px" width="12" height="12"><path d="M0 12h3M9 0h3" stroke="#ddd" stroke-width="1.2"/><rect x="2" y="6" width="3" height="4" fill="#ddd"/><rect x="6" y="2" width="3" height="4" fill="#ddd"/></svg>

<!-- SCENE WINDOW -->
<div class="a" style="left:494px;top:586px;width:89px;height:22px;background:#444;border-radius:4px 4px 0 0"></div>
<div class="t" style="left:500px;top:590px;color:#e8e8e8;font-size:11.6px;">Scene Window</div>
<div class="a" style="left:584px;top:586px;width:100px;height:22px;background:#222;border-radius:4px 4px 0 0"></div>
<div class="t" style="left:589px;top:590px;color:#e8e8e8;font-size:11.3px;">JavaScript Editor</div>
<div class="a" style="left:685px;top:586px;width:112px;height:22px;background:#222;border-radius:4px 4px 0 0"></div>
<div class="t" style="left:690px;top:590px;color:#e8e8e8;font-size:11.3px;">Dependency Graph</div>
<div class="a" style="left:494px;top:608px;width:1419px;height:22px;background:#262626;"></div>
<div class="a" style="left:499px;top:610px;width:480px;height:20px;background:#2a2a2a;border-radius:4px 4px 0 0"></div>
<div class="t" style="left:685px;top:612px;color:#bdbdbd;font-size:12.2px;">Composition 1</div>
<svg class="a" style="left:952px;top:615px" width="9" height="9"><path d="M0.5 0.5L8.5 8.5M8.5 0.5L0.5 8.5" stroke="#bbb" stroke-width="1.1"/></svg>
<div class="a" style="left:969px;top:615px;width:1px;height:11px;background:#aaa;"></div>
<div class="a" style="left:975px;top:610px;width:460px;height:20px;background:#2a2a2a;border-radius:4px 4px 0 0"></div>
<div class="t" style="left:1155px;top:612px;color:#bdbdbd;font-size:12.2px;">Composition 2</div>
<svg class="a" style="left:1422px;top:615px" width="9" height="9"><path d="M0.5 0.5L8.5 8.5M8.5 0.5L0.5 8.5" stroke="#bbb" stroke-width="1.1"/></svg>
<div class="a" style="left:1439px;top:610px;width:470px;height:20px;background:#444;border-radius:4px 4px 0 0"></div>
<div class="t" style="left:1625px;top:612px;color:#e8e8e8;font-size:12.2px;">Composition 3</div>
<svg class="a" style="left:1892px;top:615px" width="9" height="9"><path d="M0.5 0.5L8.5 8.5M8.5 0.5L0.5 8.5" stroke="#ccc" stroke-width="1.1"/></svg>
<div class="a" style="left:494px;top:630px;width:490px;height:346px;background:#2a2a2a;"></div>
<div class="a" style="left:494px;top:630px;width:490px;height:42px;background:#444;"></div>
<div class="a" style="left:494px;top:652px;width:490px;height:20px;background:#474747;"></div>
<div class="a" style="left:496px;top:632px;width:280px;height:20px;background:#262626;border-radius:10px"></div>
<svg class="a" style="left:500px;top:635px" width="14" height="14"><circle cx="6" cy="6" r="4.5" fill="none" stroke="#ccc" stroke-width="1.3"/><path d="M9.2 9.2L12.5 12.5" stroke="#ccc" stroke-width="1.6"/></svg>
<div class="t" style="left:520px;top:635px;color:#8a8a8a;font-size:11.5px;">Enter a layer name</div>
<div class="a" style="left:778px;top:633px;width:20px;height:19px;background:#2a2a2a;border-radius:4px;border:1px solid #222"></div>
<svg class="a" style="left:782px;top:637px" width="12" height="12"><path d="M6 0.5v11M0.5 6h11" stroke="#eee" stroke-width="2"/></svg>
<svg class="a" style="left:793px;top:647px" width="4" height="4"><path d="M4 0v4H0z" fill="#7ac8b0"/></svg>
<div class="a" style="left:822px;top:633px;width:20px;height:19px;background:#2a2a2a;border-radius:4px;border:1px solid #222"></div>
<svg class="a" style="left:825px;top:635px" width="15" height="15"><circle cx="9.5" cy="5" r="4" fill="#d8d8d8"/><path d="M3 12Q4 7 8 6M2 10Q2.5 7 5 5.5" fill="none" stroke="#666" stroke-width="1.2"/></svg>
<div class="a" style="left:844px;top:633px;width:20px;height:19px;background:#2a2a2a;border-radius:4px;border:1px solid #222"></div>
<svg class="a" style="left:847px;top:636px" width="14" height="14"><circle cx="2.5" cy="2" r="1.1" fill="#ccc"/><circle cx="9" cy="2.5" r="1.1" fill="#ccc"/><circle cx="2.5" cy="8" r="1.1" fill="#ccc"/><path d="M8.5 5v8M4.5 9h8" stroke="#ddd" stroke-width="1.6"/><path d="M11 14l3-3v3z" fill="#7ac8b0"/></svg>
<div class="a" style="left:866px;top:633px;width:20px;height:19px;background:#2a2a2a;border-radius:4px;border:1px solid #222"></div>
<svg class="a" style="left:869px;top:635px" width="14" height="14"><path d="M1 2.5h12M1 7h12M1 11.5h12" stroke="#ccc" stroke-width="0.9" stroke-dasharray="2 1"/><circle cx="5.5" cy="2.5" r="1.6" fill="#2a2a2a" stroke="#ccc" stroke-width="0.9"/><circle cx="9" cy="7" r="1.6" fill="#2a2a2a" stroke="#ccc" stroke-width="0.9"/><circle cx="5.5" cy="11.5" r="1.6" fill="#2a2a2a" stroke="#ccc" stroke-width="0.9"/></svg>
<div class="a" style="left:888px;top:632px;width:94px;height:20px;background:#262626;border-radius:3px"></div>
<div class="t" style="left:893px;top:635px;color:#555;font-size:12px;">F</div>
<div class="t" style="left:906px;top:635px;color:#e8e8e8;font-size:12px;">108</div>
<svg class="a" style="left:500px;top:656px" width="10" height="13"><path d="M2.5 6V4a2.5 2.5 0 0 1 5 0v2" fill="none" stroke="#cfcfcf" stroke-width="1.5"/><rect x="0.5" y="6" width="9" height="6.5" fill="#cfcfcf"/><rect x="4" y="8.5" width="2" height="2" fill="#474747"/></svg>
<svg class="a" style="left:516px;top:658px" width="15" height="9"><path d="M0.8 4.5C3 1 12 1 14.2 4.5C12 8 3 8 0.8 4.5z" fill="none" stroke="#cfcfcf" stroke-width="1"/><circle cx="7.5" cy="4.5" r="1.8" fill="#cfcfcf"/></svg>
<svg class="a" style="left:537px;top:655px" width="13" height="14"><path d="M6.5 0.8L12 3.5V10L6.5 13L1 10V3.5z M1 3.5L6.5 6.5L12 3.5M6.5 6.5V13" fill="none" stroke="#cfcfcf" stroke-width="1"/></svg>
<svg class="a" style="left:556px;top:656px" width="15" height="13"><path d="M0.5 4.5h3l4-3.5v11l-4-3.5h-3z" fill="#cfcfcf"/><path d="M9.5 3.5Q11.5 6.5 9.5 9.5M11.5 1.5Q15 6.5 11.5 11.5" fill="none" stroke="#cfcfcf" stroke-width="1.1"/></svg>
<svg class="a" style="left:575px;top:656px" width="13" height="13"><path d="M1.5 11.5L8 5" stroke="#cfcfcf" stroke-width="1.8"/><path d="M2 11L7.8 5.2" stroke="#474747" stroke-width="0.6"/><path d="M7.5 3.5L10.5 1L12 2.5L9.5 5.5z" fill="#cfcfcf"/><path d="M6.5 4.5L8.5 6.5" stroke="#cfcfcf" stroke-width="1.5"/></svg>
<svg class="a" style="left:593px;top:658px" width="15" height="9"><path d="M4 0.5H14.5V8.5H4L0.5 4.5z" fill="#cfcfcf"/><circle cx="5" cy="4.5" r="1.6" fill="#474747"/></svg>
<div class="t" style="left:649px;top:656px;color:#e8e8e8;font-size:12.2px;">Name</div>
<div class="a" style="left:494px;top:672px;width:476px;height:198px;background:#383838;"></div>
<div class="a" style="left:970px;top:672px;width:14px;height:291px;background:#2a2a2a;"></div>
<div class="a" style="left:972px;top:674px;width:10px;height:287px;background:#545454;border-radius:5px"></div>
<div class="a" style="left:496px;top:674px;width:18px;height:18px;background:#2e2e2e;border-radius:3px"></div>
<div class="a" style="left:515px;top:674px;width:18px;height:18px;background:#2e2e2e;border-radius:3px"></div>
<svg class="a" style="left:518px;top:677px" width="13" height="12"><path d="M10.5 4.5A5 5 0 1 1 8.5 1.5" fill="none" stroke="#d0d0d0" stroke-width="1.2"/><path d="M3.5 5.5L6 8L11.5 2" fill="none" stroke="#d0d0d0" stroke-width="1.5"/></svg>
<div class="a" style="left:573px;top:674px;width:16px;height:17px;background:#6cdc96;border-radius:3px"></div>
<svg class="a" style="left:593px;top:679px" width="15" height="9"><path d="M4 0.5H14.5V8.5H4L0.5 4.5z" fill="#cfcfcf"/><circle cx="5" cy="4.5" r="1.6" fill="#383838"/></svg>
<div class="a" style="left:610px;top:674px;width:32px;height:18px;background:#2e2e2e;border-radius:3px"></div>
<svg class="a" style="left:614px;top:681px" width="9" height="5"><path d="M0.5 0.5L4.5 4.5L8.5 0.5" fill="none" stroke="#999" stroke-width="1"/></svg>
<svg class="a" style="left:648px;top:676px" width="16" height="15"><path d="M0.5 6h7.5v8H0.5z" fill="#8ac8f0"/><path d="M8.5 0.5h7M10 3h5.5M10 5.5h5.5M8.5 0.5v9" stroke="#ddd" stroke-width="1"/><path d="M0.5 6h4l-2 3z" fill="#c8e8ff"/></svg>
<div class="t" style="left:667px;top:676px;color:#e0e0e0;font-size:12px;">Color Array</div>
<div class="a" style="left:930px;top:675px;width:21px;height:16px;background:#2c2c2c;border-radius:4px"></div>
<svg class="a" style="left:932px;top:678px" width="17" height="10"><path d="M1 5L4 1.5h3v7H4z" fill="#d6c070"/><path d="M10 1.5h3l3 3.5L13 8.5h-3z" fill="#d050f0"/></svg>
<div class="a" style="left:941px;top:675px;width:10px;height:16px;background:transparent;border:1px solid #b050c8"></div>
<div class="a" style="left:956px;top:678px;width:10px;height:10px;border:1.3px solid #8a8a8a;border-radius:50%"></div>
<div class="a" style="left:496px;top:696px;width:18px;height:18px;background:#2e2e2e;border-radius:3px"></div>
<div class="a" style="left:515px;top:696px;width:18px;height:18px;background:#2e2e2e;border-radius:3px"></div>
<svg class="a" style="left:518px;top:699px" width="13" height="12"><path d="M10.5 4.5A5 5 0 1 1 8.5 1.5" fill="none" stroke="#d0d0d0" stroke-width="1.2"/><path d="M3.5 5.5L6 8L11.5 2" fill="none" stroke="#d0d0d0" stroke-width="1.5"/></svg>
<div class="a" style="left:573px;top:696px;width:16px;height:17px;background:#c8ec78;border-radius:3px"></div>
<svg class="a" style="left:593px;top:701px" width="15" height="9"><path d="M4 0.5H14.5V8.5H4L0.5 4.5z" fill="#cfcfcf"/><circle cx="5" cy="4.5" r="1.6" fill="#383838"/></svg>
<svg class="a" style="left:667px;top:698px" width="16" height="15"><path d="M0.5 0.5l3 3M3.5 0.5l-3 3" stroke="#8fd8a8" stroke-width="1"/><path d="M7.5 1.5l3 3M10.5 1.5l-3 3" stroke="#8fd8a8" stroke-width="1"/><path d="M3.5 6.5l3 3M6.5 6.5l-3 3" stroke="#8fd8a8" stroke-width="1"/><path d="M0.5 11.5l3 3M3.5 11.5l-3 3" stroke="#8fd8a8" stroke-width="1"/><path d="M8.5 9.5l3 3M11.5 9.5l-3 3" stroke="#8fd8a8" stroke-width="1"/><path d="M12.5 5.5l3 3M15.5 5.5l-3 3" stroke="#8fd8a8" stroke-width="1"/></svg>
<div class="t" style="left:686px;top:698px;color:#e0e0e0;font-size:12px;">Random [Index]</div>
<div class="a" style="left:930px;top:697px;width:21px;height:16px;background:#2c2c2c;border-radius:4px"></div>
<svg class="a" style="left:932px;top:700px" width="17" height="10"><path d="M1 5L4 1.5h3v7H4z" fill="#7a7a7a"/><path d="M10 1.5h3l3 3.5L13 8.5h-3z" fill="#d050f0"/></svg>
<div class="a" style="left:956px;top:700px;width:10px;height:10px;border:1.3px solid #8a8a8a;border-radius:50%"></div>
<div class="a" style="left:496px;top:718px;width:18px;height:18px;background:#2e2e2e;border-radius:3px"></div>
<div class="a" style="left:515px;top:718px;width:18px;height:18px;background:#2e2e2e;border-radius:3px"></div>
<svg class="a" style="left:518px;top:721px" width="13" height="12"><path d="M10.5 4.5A5 5 0 1 1 8.5 1.5" fill="none" stroke="#d0d0d0" stroke-width="1.2"/><path d="M3.5 5.5L6 8L11.5 2" fill="none" stroke="#d0d0d0" stroke-width="1.5"/></svg>
<div class="a" style="left:573px;top:718px;width:16px;height:17px;background:#c8ec78;border-radius:3px"></div>
<svg class="a" style="left:593px;top:723px" width="15" height="9"><path d="M4 0.5H14.5V8.5H4L0.5 4.5z" fill="#cfcfcf"/><circle cx="5" cy="4.5" r="1.6" fill="#383838"/></svg>
<svg class="a" style="left:646px;top:722px" width="19" height="11"><path d="M0.5 6L3.5 1L7 10L10.5 1L14 10L17.5 5" fill="none" stroke="#8fd8a8" stroke-width="1.4"/></svg>
<div class="t" style="left:667px;top:720px;color:#e0e0e0;font-size:12px;">Oscillator [Position.Z] Cosine</div>
<div class="a" style="left:930px;top:719px;width:21px;height:16px;background:#2c2c2c;border-radius:4px"></div>
<svg class="a" style="left:932px;top:722px" width="17" height="10"><path d="M1 5L4 1.5h3v7H4z" fill="#d6c070"/><path d="M10 1.5h3l3 3.5L13 8.5h-3z" fill="#7a7a7a"/></svg>
<div class="a" style="left:956px;top:722px;width:10px;height:10px;border:1.3px solid #8a8a8a;border-radius:50%"></div>
<div class="a" style="left:496px;top:740px;width:18px;height:18px;background:#2e2e2e;border-radius:3px"></div>
<div class="a" style="left:515px;top:740px;width:18px;height:18px;background:#2e2e2e;border-radius:3px"></div>
<svg class="a" style="left:518px;top:743px" width="13" height="12"><path d="M10.5 4.5A5 5 0 1 1 8.5 1.5" fill="none" stroke="#d0d0d0" stroke-width="1.2"/><path d="M3.5 5.5L6 8L11.5 2" fill="none" stroke="#d0d0d0" stroke-width="1.5"/></svg>
<div class="a" style="left:573px;top:740px;width:16px;height:17px;background:#c8ec78;border-radius:3px"></div>
<svg class="a" style="left:593px;top:745px" width="15" height="9"><path d="M4 0.5H14.5V8.5H4L0.5 4.5z" fill="#cfcfcf"/><circle cx="5" cy="4.5" r="1.6" fill="#383838"/></svg>
<svg class="a" style="left:646px;top:744px" width="19" height="11"><path d="M0.5 6L3.5 1L7 10L10.5 1L14 10L17.5 5" fill="none" stroke="#8fd8a8" stroke-width="1.4"/></svg>
<div class="t" style="left:667px;top:742px;color:#e0e0e0;font-size:12px;">Oscillator [Position.X] Sine Driver</div>
<div class="a" style="left:930px;top:741px;width:21px;height:16px;background:#2c2c2c;border-radius:4px"></div>
<svg class="a" style="left:932px;top:744px" width="17" height="10"><path d="M1 5L4 1.5h3v7H4z" fill="#d6c070"/><path d="M10 1.5h3l3 3.5L13 8.5h-3z" fill="#d050f0"/></svg>
<div class="a" style="left:956px;top:744px;width:10px;height:10px;border:1.3px solid #8a8a8a;border-radius:50%"></div>
<div class="a" style="left:496px;top:762px;width:18px;height:18px;background:#2e2e2e;border-radius:3px"></div>
<div class="a" style="left:515px;top:762px;width:18px;height:18px;background:#2e2e2e;border-radius:3px"></div>
<svg class="a" style="left:518px;top:765px" width="13" height="12"><path d="M10.5 4.5A5 5 0 1 1 8.5 1.5" fill="none" stroke="#d0d0d0" stroke-width="1.2"/><path d="M3.5 5.5L6 8L11.5 2" fill="none" stroke="#d0d0d0" stroke-width="1.5"/></svg>
<div class="a" style="left:573px;top:762px;width:16px;height:17px;background:#6690e8;border-radius:3px"></div>
<svg class="a" style="left:593px;top:767px" width="15" height="9"><path d="M4 0.5H14.5V8.5H4L0.5 4.5z" fill="#cfcfcf"/><circle cx="5" cy="4.5" r="1.6" fill="#383838"/></svg>
<svg class="a" style="left:648px;top:762px" width="16" height="17"><path d="M0.5 5h9.5v11H0.5z" fill="#a8d8f8"/><path d="M4.5 8v7" stroke="#555" stroke-width="1.5"/><path d="M11.5 0.5v5M9 3h5M14 5v4M12 7h4" stroke="#ddd" stroke-width="1"/></svg>
<div class="t" style="left:667px;top:764px;color:#e0e0e0;font-size:12px;">Index Context [Number]</div>
<div class="a" style="left:930px;top:763px;width:21px;height:16px;background:#2c2c2c;border-radius:4px"></div>
<svg class="a" style="left:932px;top:766px" width="17" height="10"><path d="M1 5L4 1.5h3v7H4z" fill="#7a7a7a"/><path d="M10 1.5h3l3 3.5L13 8.5h-3z" fill="#d050f0"/></svg>
<div class="a" style="left:956px;top:766px;width:10px;height:10px;border:1.3px solid #8a8a8a;border-radius:50%"></div>
<div class="a" style="left:496px;top:784px;width:18px;height:18px;background:#2e2e2e;border-radius:3px"></div>
<div class="a" style="left:515px;top:784px;width:18px;height:18px;background:#2e2e2e;border-radius:3px"></div>
<svg class="a" style="left:518px;top:787px" width="13" height="12"><path d="M10.5 4.5A5 5 0 1 1 8.5 1.5" fill="none" stroke="#d0d0d0" stroke-width="1.2"/><path d="M3.5 5.5L6 8L11.5 2" fill="none" stroke="#d0d0d0" stroke-width="1.5"/></svg>
<div class="a" style="left:573px;top:784px;width:16px;height:17px;background:#6690e8;border-radius:3px"></div>
<svg class="a" style="left:593px;top:789px" width="15" height="9"><path d="M4 0.5H14.5V8.5H4L0.5 4.5z" fill="#cfcfcf"/><circle cx="5" cy="4.5" r="1.6" fill="#383838"/></svg>
<svg class="a" style="left:648px;top:786px" width="15" height="15"><text x="0" y="8" font-family="Liberation Sans" font-size="9" fill="#a8d8f8">abc</text><path d="M0.5 10.5h14M0.5 13h3M5.5 13h3M10.5 13h4" stroke="#a8d8f8" stroke-width="1"/></svg>
<div class="t" style="left:667px;top:786px;color:#e0e0e0;font-size:12px;">String Generator [String]</div>
<div class="a" style="left:930px;top:785px;width:21px;height:16px;background:#2c2c2c;border-radius:4px"></div>
<svg class="a" style="left:932px;top:788px" width="17" height="10"><path d="M1 5L4 1.5h3v7H4z" fill="#d6c070"/><path d="M10 1.5h3l3 3.5L13 8.5h-3z" fill="#d050f0"/></svg>
<div class="a" style="left:956px;top:788px;width:10px;height:10px;border:1.3px solid #8a8a8a;border-radius:50%"></div>
<div class="a" style="left:496px;top:806px;width:18px;height:18px;background:#2e2e2e;border-radius:3px"></div>
<div class="a" style="left:515px;top:806px;width:18px;height:18px;background:#2e2e2e;border-radius:3px"></div>
<div class="a" style="left:534px;top:806px;width:18px;height:18px;background:#2e2e2e;border-radius:3px"></div>
<svg class="a" style="left:517px;top:811px" width="14" height="9"><path d="M0.8 4.5C3 1 11 1 13.2 4.5C11 8 3 8 0.8 4.5z" fill="none" stroke="#d0d0d0" stroke-width="1.1"/><circle cx="7" cy="4.5" r="1.8" fill="#d0d0d0"/></svg>
<div class="a" style="left:573px;top:806px;width:16px;height:17px;background:#ffe07a;border-radius:3px"></div>
<svg class="a" style="left:593px;top:811px" width="15" height="9"><path d="M4 0.5H14.5V8.5H4L0.5 4.5z" fill="#cfcfcf"/><circle cx="5" cy="4.5" r="1.6" fill="#383838"/></svg>
<svg class="a" style="left:648px;top:808px" width="14" height="14"><rect x="0.5" y="0.5" width="2" height="2" fill="#f0dc78"/><rect x="0.5" y="6" width="2" height="2" fill="#f0dc78"/><rect x="0.5" y="11.5" width="2" height="2" fill="#f0dc78"/><rect x="6" y="0.5" width="2" height="2" fill="#f0dc78"/><rect x="6" y="6" width="2" height="2" fill="#f0dc78"/><rect x="6" y="11.5" width="2" height="2" fill="#f0dc78"/><rect x="11.5" y="0.5" width="2" height="2" fill="#f0dc78"/><rect x="11.5" y="6" width="2" height="2" fill="#f0dc78"/><rect x="11.5" y="11.5" width="2" height="2" fill="#f0dc78"/></svg>
<div class="t" style="left:667px;top:808px;color:#e8e8e8;font-size:12px;">Duplicator</div>
<div class="a" style="left:930px;top:807px;width:21px;height:16px;background:#2c2c2c;border-radius:4px"></div>
<svg class="a" style="left:932px;top:810px" width="17" height="10"><path d="M1 5L4 1.5h3v7H4z" fill="#d6c070"/><path d="M10 1.5h3l3 3.5L13 8.5h-3z" fill="#7a7a7a"/></svg>
<div class="a" style="left:956px;top:810px;width:10px;height:10px;border:1.3px solid #8a8a8a;border-radius:50%"></div>
<div class="a" style="left:497px;top:827px;width:472px;height:21px;background:#57503e;border-top:1px solid #6e6446;border-bottom:1px solid #6e6446"></div>
<div class="a" style="left:496px;top:828px;width:18px;height:18px;background:#2e2e2e;border-radius:3px"></div>
<div class="a" style="left:515px;top:828px;width:18px;height:18px;background:#2e2e2e;border-radius:3px"></div>
<div class="a" style="left:534px;top:828px;width:18px;height:18px;background:#2e2e2e;border-radius:3px"></div>
<div class="a" style="left:573px;top:828px;width:16px;height:17px;background:#ffe07a;border-radius:3px"></div>
<svg class="a" style="left:593px;top:833px" width="15" height="9"><path d="M4 0.5H14.5V8.5H4L0.5 4.5z" fill="#cfcfcf"/><circle cx="5" cy="4.5" r="1.6" fill="#57503e"/></svg>
<div class="a" style="left:610px;top:828px;width:32px;height:18px;background:#2e2e2e;border-radius:3px"></div>
<svg class="a" style="left:614px;top:835px" width="9" height="5"><path d="M0.5 0.5L4.5 4.5L8.5 0.5" fill="none" stroke="#999" stroke-width="1"/></svg>
<svg class="a" style="left:648px;top:830px" width="14" height="15"><rect x="1" y="1" width="12" height="13" fill="none" stroke="#f0dc78" stroke-width="1.1" stroke-dasharray="3 2"/></svg>
<div class="t" style="left:667px;top:830px;color:#9a9a9a;font-size:12px;">Ellipse Shape</div>
<div class="a" style="left:930px;top:829px;width:21px;height:16px;background:#2c2c2c;border-radius:4px"></div>
<svg class="a" style="left:932px;top:832px" width="17" height="10"><path d="M1 5L4 1.5h3v7H4z" fill="#d6c070"/><path d="M10 1.5h3l3 3.5L13 8.5h-3z" fill="#d050f0"/></svg>
<div class="a" style="left:956px;top:832px;width:10px;height:10px;border:1.3px solid #8a8a8a;border-radius:50%"></div>
<div class="a" style="left:496px;top:850px;width:18px;height:18px;background:#2e2e2e;border-radius:3px"></div>
<div class="a" style="left:515px;top:850px;width:18px;height:18px;background:#2e2e2e;border-radius:3px"></div>
<div class="a" style="left:534px;top:850px;width:18px;height:18px;background:#2e2e2e;border-radius:3px"></div>
<svg class="a" style="left:517px;top:855px" width="14" height="9"><path d="M0.8 4.5C3 1 11 1 13.2 4.5C11 8 3 8 0.8 4.5z" fill="none" stroke="#5a5a5a" stroke-width="1.1"/><circle cx="7" cy="4.5" r="1.8" fill="#5a5a5a"/></svg>
<div class="a" style="left:573px;top:850px;width:16px;height:17px;background:#b88cf8;border-radius:3px"></div>
<svg class="a" style="left:593px;top:855px" width="15" height="9"><path d="M4 0.5H14.5V8.5H4L0.5 4.5z" fill="#cfcfcf"/><circle cx="5" cy="4.5" r="1.6" fill="#383838"/></svg>
<svg class="a" style="left:667px;top:851px" width="16" height="17"><rect x="1.5" y="1.5" width="13" height="14" fill="none" stroke="#ddd" stroke-width="1"/><path d="M4.5 4.5h7v2M8 4.5v8.5M6 13h4" fill="none" stroke="#f0dc78" stroke-width="2"/></svg>
<div class="t" style="left:686px;top:852px;color:#9a9a9a;font-size:12px;">Cavalry</div>
<div class="a" style="left:930px;top:851px;width:21px;height:16px;background:#2c2c2c;border-radius:4px"></div>
<svg class="a" style="left:932px;top:854px" width="17" height="10"><path d="M1 5L4 1.5h3v7H4z" fill="#d6c070"/><path d="M10 1.5h3l3 3.5L13 8.5h-3z" fill="#7a7a7a"/></svg>
<div class="a" style="left:956px;top:854px;width:10px;height:10px;border:1.3px solid #8a8a8a;border-radius:50%"></div>
<div class="a" style="left:615px;top:800px;width:358px;height:30px;border:3px solid #b6e41c"></div>
<div class="a" style="left:931px;top:807px;width:9px;height:16px;background:transparent;border:1px solid #d6c070;border-radius:2px"></div>
<div class="a" style="left:494px;top:963px;width:476px;height:13px;background:#2a2a2a;"></div>
<div class="a" style="left:496px;top:965px;width:472px;height:9px;background:#545454;border-radius:5px"></div>
<div class="a" style="left:970px;top:963px;width:14px;height:13px;background:#2e2e2e;"></div>
<div class="a" style="left:494px;top:976px;width:490px;height:22px;background:#464646;"></div>
<div class="a" style="left:497px;top:978px;width:19px;height:19px;background:#2a2a2a;border-radius:4px;border:1px solid #222"></div>
<svg class="a" style="left:499px;top:983px" width="15" height="9"><path d="M4 0.5H14.5V8.5H4L0.5 4.5z" fill="#cfcfcf"/><circle cx="5" cy="4.5" r="1.6" fill="#2a2a2a"/></svg>
<div class="t" style="left:520px;top:980px;color:#e8e8e8;font-size:12px;">1 selected</div>
<div class="a" style="left:775px;top:978px;width:19px;height:19px;background:#2a2a2a;border-radius:4px;border:1px solid #222"></div>
<div class="a" style="left:779px;top:982px;width:11px;height:11px;background:transparent;border:1.3px solid #ccc"></div>
<div class="a" style="left:783px;top:986px;width:3px;height:3px;background:#ccc;"></div>
<div class="a" style="left:798px;top:978px;width:184px;height:19px;background:#555;border-radius:4px"></div>
<div class="a" style="left:799px;top:979px;width:87px;height:17px;background:#2a2a2a;border-radius:3px"></div>
<svg class="a" style="left:804px;top:982px" width="13" height="11"><path d="M0 1h12M2.5 5.5h10M0 10h12" stroke="#3cc464" stroke-width="2"/></svg>
<div class="t" style="left:820px;top:980px;color:#e8e8e8;font-size:12px;">Time Editor</div>
<svg class="a" style="left:893px;top:981px" width="14" height="13"><path d="M1.5 0.5v12h12" fill="none" stroke="#bbb" stroke-width="1"/><path d="M3 11L12 3" stroke="#bbb" stroke-width="1"/></svg>
<div class="t" style="left:910px;top:980px;color:#e8e8e8;font-size:12px;">Graph Editor</div>
<div class="a" style="left:984px;top:630px;width:4px;height:368px;background:#262626;"></div>
<div class="a" style="left:988px;top:630px;width:3px;height:368px;background:#1e1e1e;"></div>
<div class="a" style="left:986px;top:808px;width:1px;height:14px;border-left:1px dotted #777"></div>
<div class="a" style="left:991px;top:630px;width:922px;height:346px;background:#282828;"></div>
<div class="a" style="left:991px;top:670px;width:9px;height:293px;background:#1e1e1e;"></div>
<div class="a" style="left:991px;top:630px;width:922px;height:24px;background:#262626;"></div>
<svg class="a" style="left:0;top:630px" width="1920" height="25"><rect x="997.50" y="15" width="1" height="9" fill="#9a9a9a"/><rect x="1008.38" y="19" width="1" height="5" fill="#707070"/><rect x="1019.27" y="19" width="1" height="5" fill="#707070"/><rect x="1030.15" y="19" width="1" height="5" fill="#707070"/><rect x="1041.04" y="19" width="1" height="5" fill="#707070"/><rect x="1051.92" y="15" width="1" height="9" fill="#9a9a9a"/><rect x="1062.81" y="19" width="1" height="5" fill="#707070"/><rect x="1073.69" y="19" width="1" height="5" fill="#707070"/><rect x="1084.58" y="19" width="1" height="5" fill="#707070"/><rect x="1095.46" y="19" width="1" height="5" fill="#707070"/><rect x="1106.35" y="15" width="1" height="9" fill="#9a9a9a"/><rect x="1117.23" y="19" width="1" height="5" fill="#707070"/><rect x="1128.12" y="19" width="1" height="5" fill="#707070"/><rect x="1139.01" y="19" width="1" height="5" fill="#707070"/><rect x="1149.89" y="19" width="1" height="5" fill="#707070"/><rect x="1160.78" y="15" width="1" height="9" fill="#9a9a9a"/><rect x="1171.66" y="19" width="1" height="5" fill="#707070"/><rect x="1182.55" y="19" width="1" height="5" fill="#707070"/><rect x="1193.43" y="19" width="1" height="5" fill="#707070"/><rect x="1204.32" y="19" width="1" height="5" fill="#707070"/><rect x="1215.20" y="15" width="1" height="9" fill="#9a9a9a"/><rect x="1226.09" y="19" width="1" height="5" fill="#707070"/><rect x="1236.97" y="19" width="1" height="5" fill="#707070"/><rect x="1247.86" y="19" width="1" height="5" fill="#707070"/><rect x="1258.74" y="19" width="1" height="5" fill="#707070"/><rect x="1269.62" y="15" width="1" height="9" fill="#9a9a9a"/><rect x="1280.51" y="19" width="1" height="5" fill="#707070"/><rect x="1291.39" y="19" width="1" height="5" fill="#707070"/><rect x="1302.28" y="19" width="1" height="5" fill="#707070"/><rect x="1313.16" y="19" width="1" height="5" fill="#707070"/><rect x="1324.05" y="15" width="1" height="9" fill="#9a9a9a"/><rect x="1334.93" y="19" width="1" height="5" fill="#707070"/><rect x="1345.82" y="19" width="1" height="5" fill="#707070"/><rect x="1356.70" y="19" width="1" height="5" fill="#707070"/><rect x="1367.59" y="19" width="1" height="5" fill="#707070"/><rect x="1378.47" y="15" width="1" height="9" fill="#9a9a9a"/><rect x="1389.36" y="19" width="1" height="5" fill="#707070"/><rect x="1400.24" y="19" width="1" height="5" fill="#707070"/><rect x="1411.13" y="19" width="1" height="5" fill="#707070"/><rect x="1422.01" y="19" width="1" height="5" fill="#707070"/><rect x="1432.90" y="15" width="1" height="9" fill="#9a9a9a"/><rect x="1443.78" y="19" width="1" height="5" fill="#707070"/><rect x="1454.67" y="19" width="1" height="5" fill="#707070"/><rect x="1465.55" y="19" width="1" height="5" fill="#707070"/><rect x="1476.44" y="19" width="1" height="5" fill="#707070"/><rect x="1487.32" y="15" width="1" height="9" fill="#9a9a9a"/><rect x="1498.21" y="19" width="1" height="5" fill="#707070"/><rect x="1509.10" y="19" width="1" height="5" fill="#707070"/><rect x="1519.98" y="19" width="1" height="5" fill="#707070"/><rect x="1530.86" y="19" width="1" height="5" fill="#707070"/><rect x="1541.75" y="15" width="1" height="9" fill="#9a9a9a"/><rect x="1552.63" y="19" width="1" height="5" fill="#707070"/><rect x="1563.52" y="19" width="1" height="5" fill="#707070"/><rect x="1574.40" y="19" width="1" height="5" fill="#707070"/><rect x="1585.29" y="19" width="1" height="5" fill="#707070"/><rect x="1596.17" y="15" width="1" height="9" fill="#9a9a9a"/><rect x="1607.06" y="19" width="1" height="5" fill="#707070"/><rect x="1617.94" y="19" width="1" height="5" fill="#707070"/><rect x="1628.83" y="19" width="1" height="5" fill="#707070"/><rect x="1639.71" y="19" width="1" height="5" fill="#707070"/><rect x="1650.60" y="15" width="1" height="9" fill="#9a9a9a"/><rect x="1661.48" y="19" width="1" height="5" fill="#707070"/><rect x="1672.37" y="19" width="1" height="5" fill="#707070"/><rect x="1683.25" y="19" width="1" height="5" fill="#707070"/><rect x="1694.14" y="19" width="1" height="5" fill="#707070"/><rect x="1705.03" y="15" width="1" height="9" fill="#9a9a9a"/><rect x="1715.91" y="19" width="1" height="5" fill="#707070"/><rect x="1726.80" y="19" width="1" height="5" fill="#707070"/><rect x="1737.68" y="19" width="1" height="5" fill="#707070"/><rect x="1748.57" y="19" width="1" height="5" fill="#707070"/><rect x="1759.45" y="15" width="1" height="9" fill="#9a9a9a"/><rect x="1770.34" y="19" width="1" height="5" fill="#707070"/><rect x="1781.22" y="19" width="1" height="5" fill="#707070"/><rect x="1792.11" y="19" width="1" height="5" fill="#707070"/><rect x="1802.99" y="19" width="1" height="5" fill="#707070"/><rect x="1813.88" y="15" width="1" height="9" fill="#9a9a9a"/><rect x="1824.76" y="19" width="1" height="5" fill="#707070"/><rect x="1835.64" y="19" width="1" height="5" fill="#707070"/><rect x="1846.53" y="19" width="1" height="5" fill="#707070"/><rect x="1857.41" y="19" width="1" height="5" fill="#707070"/><rect x="1868.30" y="15" width="1" height="9" fill="#9a9a9a"/><rect x="1879.18" y="19" width="1" height="5" fill="#707070"/><rect x="1890.07" y="19" width="1" height="5" fill="#707070"/><rect x="1900.95" y="19" width="1" height="5" fill="#707070"/><rect x="1911.84" y="19" width="1" height="5" fill="#707070"/></svg>
<div class="t" style="left:973.0px;top:632px;width:50px;text-align:center;color:#dcdcdc;font-size:12.5px">0</div>
<div class="t" style="left:1027.4px;top:632px;width:50px;text-align:center;color:#dcdcdc;font-size:12.5px">15</div>
<div class="t" style="left:1081.8px;top:632px;width:50px;text-align:center;color:#dcdcdc;font-size:12.5px">30</div>
<div class="t" style="left:1136.3px;top:632px;width:50px;text-align:center;color:#dcdcdc;font-size:12.5px">45</div>
<div class="t" style="left:1190.7px;top:632px;width:50px;text-align:center;color:#dcdcdc;font-size:12.5px">60</div>
<div class="t" style="left:1245.1px;top:632px;width:50px;text-align:center;color:#dcdcdc;font-size:12.5px">75</div>
<div class="t" style="left:1299.5px;top:632px;width:50px;text-align:center;color:#dcdcdc;font-size:12.5px">90</div>
<div class="t" style="left:1354.0px;top:632px;width:50px;text-align:center;color:#dcdcdc;font-size:12.5px">105</div>
<div class="t" style="left:1408.4px;top:632px;width:50px;text-align:center;color:#dcdcdc;font-size:12.5px">120</div>
<div class="t" style="left:1462.8px;top:632px;width:50px;text-align:center;color:#dcdcdc;font-size:12.5px">135</div>
<div class="t" style="left:1517.2px;top:632px;width:50px;text-align:center;color:#dcdcdc;font-size:12.5px">150</div>
<div class="t" style="left:1571.7px;top:632px;width:50px;text-align:center;color:#dcdcdc;font-size:12.5px">165</div>
<div class="t" style="left:1626.1px;top:632px;width:50px;text-align:center;color:#dcdcdc;font-size:12.5px">180</div>
<div class="t" style="left:1680.5px;top:632px;width:50px;text-align:center;color:#dcdcdc;font-size:12.5px">195</div>
<div class="t" style="left:1734.9px;top:632px;width:50px;text-align:center;color:#dcdcdc;font-size:12.5px">210</div>
<div class="t" style="left:1789.4px;top:632px;width:50px;text-align:center;color:#dcdcdc;font-size:12.5px">225</div>
<div class="t" style="left:1843.8px;top:632px;width:50px;text-align:center;color:#dcdcdc;font-size:12.5px">240</div>
<div class="a" style="left:991px;top:654px;width:922px;height:16px;background:#262626;"></div>
<div class="a" style="left:1000px;top:654px;width:905px;height:16px;background:#444;"></div>
<div class="a" style="left:995px;top:654px;width:5px;height:17px;background:#7ac8b0;border-radius:1px"></div>
<div class="a" style="left:1905px;top:654px;width:6px;height:17px;background:#7ac8b0;border-radius:1px"></div>
<div class="a" style="left:1000px;top:674px;width:905px;height:18px;background:repeating-linear-gradient(135deg,#74e0a2 0,#74e0a2 1.2px,#8af4ba 1.2px,#8af4ba 2.6px,#74e0a2 2.6px,#74e0a2 12.7px,#64cc8e 12.7px,#64cc8e 25.46px);border-radius:3px 0 0 3px"></div>
<div class="t" style="left:1008px;top:676px;color:#111;font-size:11.7px;">Color Array</div>
<div class="a" style="left:1000px;top:696px;width:905px;height:18px;background:repeating-linear-gradient(135deg,#c8ee80 0,#c8ee80 1.2px,#dcfaa0 1.2px,#dcfaa0 2.6px,#c8ee80 2.6px,#c8ee80 12.7px,#b8d874 12.7px,#b8d874 25.46px);border-radius:3px 0 0 3px"></div>
<div class="t" style="left:1008px;top:698px;color:#111;font-size:11.7px;">Random [Index]</div>
<div class="a" style="left:1000px;top:718px;width:905px;height:18px;background:repeating-linear-gradient(135deg,#c8ee80 0,#c8ee80 1.2px,#dcfaa0 1.2px,#dcfaa0 2.6px,#c8ee80 2.6px,#c8ee80 12.7px,#b8d874 12.7px,#b8d874 25.46px);border-radius:3px 0 0 3px"></div>
<div class="t" style="left:1008px;top:720px;color:#111;font-size:11.7px;">Oscillator [Position.Z] Cosine</div>
<div class="a" style="left:1000px;top:740px;width:905px;height:18px;background:repeating-linear-gradient(135deg,#c8ee80 0,#c8ee80 1.2px,#dcfaa0 1.2px,#dcfaa0 2.6px,#c8ee80 2.6px,#c8ee80 12.7px,#b8d874 12.7px,#b8d874 25.46px);border-radius:3px 0 0 3px"></div>
<div class="t" style="left:1008px;top:742px;color:#111;font-size:11.7px;">Oscillator [Position.X] Sine Driver</div>
<div class="a" style="left:1000px;top:762px;width:905px;height:18px;background:repeating-linear-gradient(135deg,#6890ea 0,#6890ea 1.2px,#7aa2f4 1.2px,#7aa2f4 2.6px,#6890ea 2.6px,#6890ea 12.7px,#5a80d4 12.7px,#5a80d4 25.46px);border-radius:3px 0 0 3px"></div>
<div class="t" style="left:1008px;top:764px;color:#fff;font-size:11.7px;">Index Context [Number]</div>
<div class="a" style="left:1000px;top:784px;width:905px;height:18px;background:repeating-linear-gradient(135deg,#6890ea 0,#6890ea 1.2px,#7aa2f4 1.2px,#7aa2f4 2.6px,#6890ea 2.6px,#6890ea 12.7px,#5a80d4 12.7px,#5a80d4 25.46px);border-radius:3px 0 0 3px"></div>
<div class="t" style="left:1008px;top:786px;color:#fff;font-size:11.7px;">String Generator [String]</div>
<div class="a" style="left:1000px;top:806px;width:905px;height:18px;background:#ffe67a;border-radius:3px 0 0 3px"></div>
<div class="t" style="left:1008px;top:808px;color:#111;font-size:11.7px;">Duplicator</div>
<div class="a" style="left:1000px;top:828px;width:905px;height:18px;background:radial-gradient(circle,#d6c46a 0.55px,transparent 0.95px) 0 0/3px 3px,radial-gradient(circle,#d6c46a 0.55px,transparent 0.95px) 1.5px 1.5px/3px 3px,#fff08e;border-radius:3px 0 0 3px;box-shadow:inset 0 0 0 1px #fff"></div>
<div class="t" style="left:1008px;top:830px;color:#111;font-size:11.7px;">Ellipse Shape</div>
<div class="a" style="left:1000px;top:850px;width:905px;height:18px;background:#b48cf8;border-radius:3px 0 0 3px"></div>
<div class="t" style="left:1008px;top:852px;color:#fff;font-size:11.7px;">Cavalry</div>
<div class="a" style="left:1390px;top:654px;width:2px;height:309px;background:#6cc0a8;"></div>
<svg class="a" style="left:1383px;top:643px" width="16" height="11"><path d="M0.5 0.5H15L7.75 10z" fill="#7ac8b0"/></svg>
<div class="a" style="left:991px;top:963px;width:922px;height:13px;background:#262626;"></div>
<div class="a" style="left:992px;top:964px;width:921px;height:10px;background:#545454;border-radius:5px"></div>
<div class="a" style="left:991px;top:976px;width:922px;height:22px;background:#464646;"></div>
<div class="a" style="left:995px;top:978px;width:18px;height:19px;background:#2a2a2a;border-radius:4px;border:1px solid #222"></div>
<svg class="a" style="left:998px;top:981px" width="13" height="13"><path d="M0 1.5h12M0 6h2M4 6h8M0 10.5h4M6 10.5h2" stroke="#ddd" stroke-width="1.6"/><path d="M10 13l3-3v3z" fill="#7ac8b0"/></svg>
<div class="a" style="left:1014px;top:979px;width:151px;height:17px;background:#2e2e2e;border-radius:3px"></div>
<div class="t" style="left:1017px;top:980px;color:#e8e8e8;font-size:11.8px;">Default Keyframe Layer</div>
<div class="a" style="left:1171px;top:979px;width:70px;height:17px;background:#2e2e2e;border-radius:3px"></div>
<div class="t" style="left:1176px;top:980px;color:#555;font-size:11px;">F</div>
<div class="t" style="left:1189px;top:980px;color:#ccc;font-size:12px;">-</div>
<div class="t" style="left:1247px;top:980px;color:#e0e0e0;font-size:12px;">Align:</div>
<div class="a" style="left:1284px;top:978px;width:54px;height:19px;background:#2a2a2a;border-radius:4px;border:1px solid #222"></div>
<svg class="a" style="left:1287px;top:981px" width="48" height="13"><path d="M1 0.5v12M3 3h7M3 9h5M3 6h2M2 12h3" stroke="#ddd" stroke-width="1.2" stroke-dasharray="2 1"/><path d="M24 0.5v12M19 4h10M19 9h10" stroke="#ddd" stroke-width="1.2" stroke-dasharray="2 1"/><path d="M46 0.5v12M37 3h7M39 9h5" stroke="#ddd" stroke-width="1.2" stroke-dasharray="2 1"/></svg>
<div class="a" style="left:1340px;top:978px;width:19px;height:19px;background:#2a2a2a;border-radius:4px;border:1px solid #222"></div>
<svg class="a" style="left:1343px;top:981px" width="13" height="13"><rect x="1" y="1" width="11" height="11" fill="none" stroke="#ddd" stroke-width="1.2" stroke-dasharray="2 1.5"/><rect x="4" y="4" width="5" height="5" fill="#ddd"/></svg>
<div class="a" style="left:1362px;top:978px;width:32px;height:19px;background:#2a2a2a;border-radius:4px;border:1px solid #222"></div>
<svg class="a" style="left:1365px;top:981px" width="13" height="13"><path d="M2 9A5 5 0 0 1 11 5" fill="none" stroke="#ddd" stroke-width="2"/></svg>
<svg class="a" style="left:1383px;top:983px" width="7" height="9"><path d="M1 1V8L6 4.5z" fill="none" stroke="#888" stroke-width="0.9"/></svg>
<div class="a" style="left:1398px;top:978px;width:28px;height:19px;background:#2a2a2a;border-radius:4px;border:1px solid #222"></div>
<svg class="a" style="left:1400px;top:981px" width="14" height="13"><path d="M1 6.5h12M7 1v11M4 3.5v6M10 3.5v6" stroke="#ddd" stroke-width="1.1"/></svg>
<svg class="a" style="left:1416px;top:983px" width="7" height="9"><path d="M1 1V8L6 4.5z" fill="none" stroke="#888" stroke-width="0.9"/></svg>
<svg class="a" style="left:1742px;top:979px" width="16" height="16"><circle cx="6.5" cy="6.5" r="5" fill="none" stroke="#ccc" stroke-width="1.2"/><path d="M10 10l4.5 4.5" stroke="#ccc" stroke-width="1.5"/><path d="M4 6.5h5" stroke="#ccc" stroke-width="1.2"/></svg>
<div class="a" style="left:1767px;top:986px;width:115px;height:3px;background:#3a3a3a;border-radius:2px"></div>
<div class="a" style="left:1762px;top:982px;width:10px;height:10px;border-radius:50%;background:#5fc0a0;border:1px solid #86d0b8"></div>
<svg class="a" style="left:1886px;top:979px" width="16" height="16"><circle cx="6.5" cy="6.5" r="5" fill="none" stroke="#ccc" stroke-width="1.2"/><path d="M10 10l4.5 4.5" stroke="#ccc" stroke-width="1.5"/><path d="M4 6.5h5M6.5 4v5" stroke="#ccc" stroke-width="1.2"/></svg>
<div class="a" style="left:494px;top:998px;width:1419px;height:5px;background:#131313;"></div>
<div class="a" style="left:494px;top:1003px;width:1419px;height:23px;background:#3c3c3c;"></div>
<div class="a" style="left:498px;top:1009px;width:2px;height:2px;background:#888;box-shadow:0 4px #888,0 8px #888"></div>
<div class="a" style="left:506px;top:1005px;width:19px;height:19px;background:#2a2a2a;border-radius:4px;border:1px solid #222"></div>
<svg class="a" style="left:509px;top:1008px" width="14" height="13"><path d="M1 1h12v8H6l-3 3v-3H1z" fill="#ddd"/><path d="M3 3.5h8M3 6h8" stroke="#333" stroke-width="1"/><path d="M11 13l3-3v3z" fill="#7ac8b0"/></svg>
<div class="a" style="left:528px;top:1007px;width:18px;height:15px;background:#2ec060;border-radius:2px"></div>
<div class="t" style="left:533px;top:1007px;color:#111;font-size:11px;">0</div>
<div class="a" style="left:554px;top:1012px;width:6px;height:6px;background:#3cc464;border-radius:50%"></div>
<div class="t" style="left:565px;top:1008px;color:#e8e8e8;font-size:12px;">Undo (Set Attribute (1))</div>
<div class="a" style="left:1610px;top:1005px;width:80px;height:19px;background:#d8c070;border-radius:2px"></div>
<div class="t" style="left:1616px;top:1008px;color:#222;font-size:11.5px;">Feedback</div>
<svg class="a" style="left:1672px;top:1008px" width="13" height="13"><rect x="1" y="1" width="10" height="11" fill="#f8f0f0"/><path d="M3 10L11 2" stroke="#e05050" stroke-width="2"/></svg>
<div class="a" style="left:1693px;top:1005px;width:109px;height:19px;background:#3cc864;border-radius:2px"></div>
<div class="t" style="left:1699px;top:1008px;color:#111;font-size:11.5px;">Upgrade to Pro</div>
<svg class="a" style="left:1781px;top:1009px" width="16" height="12"><path d="M2 11L1 5L4 2L7 6L6 11zM9 11L8 6L11 2L14 5L13 11z" fill="#f0c020"/></svg>
<div class="a" style="left:1805px;top:1005px;width:105px;height:19px;background:#38b0f0;border-radius:2px"></div>
<div class="t" style="left:1810px;top:1008px;color:#111;font-size:11.5px;">Tips and Tricks</div>
<svg class="a" style="left:1889px;top:1008px" width="14" height="14"><path d="M3 11L5 6L11 1L12.5 2.5L8 8z" fill="#e8e8e8"/><path d="M2 12L4 9L5 10z" fill="#f05050"/></svg>

</body></html>
